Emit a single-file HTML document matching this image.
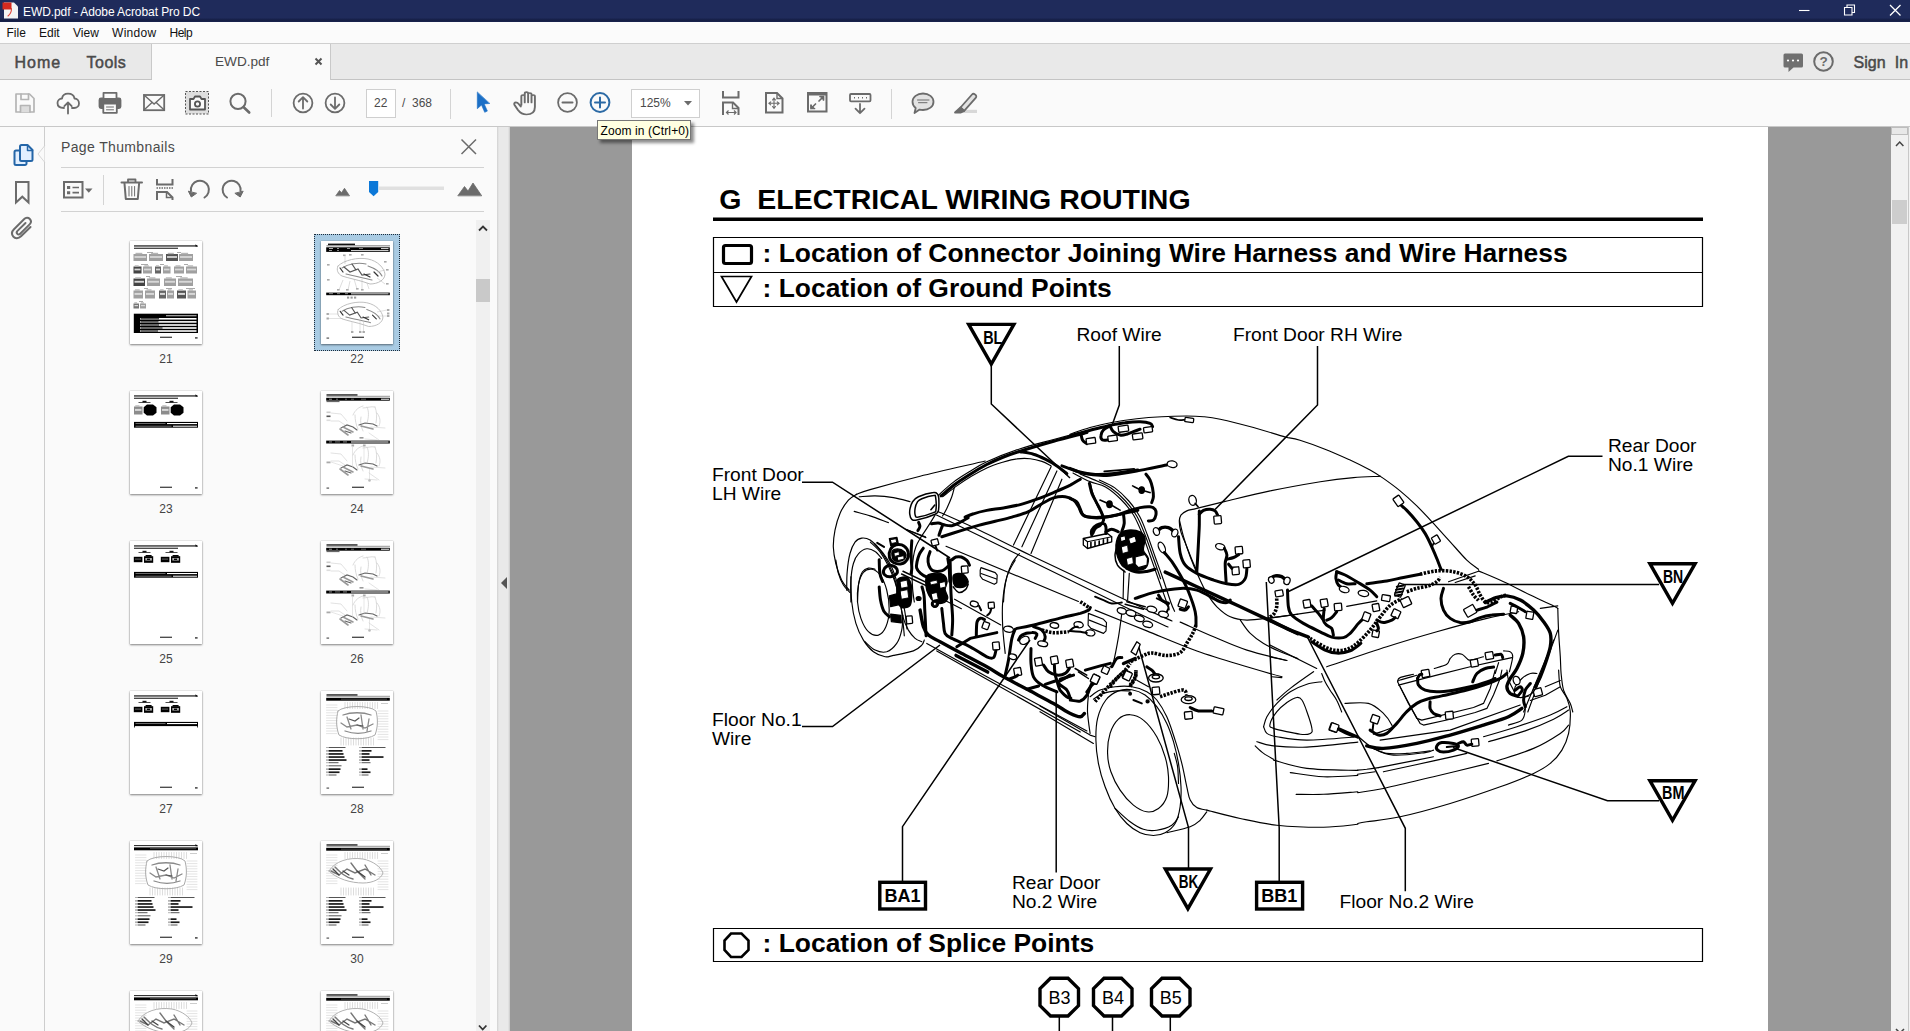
<!DOCTYPE html>
<html lang="en">
<head>
<meta charset="utf-8">
<title>EWD.pdf - Adobe Acrobat Pro DC</title>
<style>
html,body{margin:0;padding:0;}
body{width:1910px;height:1031px;overflow:hidden;position:relative;background:#fafafa;font-family:"Liberation Sans",sans-serif;color:#222;}
.abs{position:absolute;}
.t{position:absolute;white-space:pre;line-height:1;}
#titlebar{left:0;top:0;width:1910px;height:22px;background:linear-gradient(#1f2b5b 0,#1f2b5b 18px,#18224c 19px,#141d42 21px,#1b2654 22px);}
#titlebar .t{color:#fff;font-size:12px;left:23px;top:6px;letter-spacing:-0.08px;}
#menubar{left:0;top:22px;width:1910px;height:21px;background:#fbfbfb;border-bottom:1px solid #cfcfcf;}
#menubar .t{font-size:12px;top:5px;color:#111;}
#tabbar{left:0;top:44px;width:1910px;height:35px;background:#e9e9e9;border-bottom:1px solid #c4c4c4;}
#hometools{left:0;top:44px;width:152px;height:35px;background:#e9e9e9;border-right:1px solid #c9c9c9;box-sizing:border-box;}
#tab{left:152px;top:44px;width:179px;height:36px;background:#fafafa;border-right:1px solid #c9c9c9;box-sizing:border-box;}
#toolbar{left:0;top:80px;width:1910px;height:46px;background:#fafafa;border-bottom:1px solid #c8c8c8;}
#strip{left:0;top:127px;width:44px;height:904px;background:#fafafa;border-right:1px solid #cdcdcd;}
#panel{left:45px;top:127px;width:452px;height:904px;background:#fafafa;}
#splitter{left:497px;top:127px;width:13px;height:904px;background:linear-gradient(90deg,#d0d0d0 0,#e9e9e9 2px,#e9e9e9 11px,#c9c9c9 13px);}
#doc{left:510px;top:127px;width:1381px;height:904px;background:#999999;}
#page{left:632px;top:127px;width:1136px;height:904px;background:#ffffff;}
#vscroll{left:1891px;top:127px;width:19px;height:904px;background:#f1f1f1;}
.ui{color:#4a4a4a;}
.sb{-webkit-text-stroke:.5px #4a4a4a;}
.num{font-size:12px;color:#4a4a4a;}
.thumb{position:absolute;width:72px;height:103px;background:#fff;box-shadow:0 1px 2px rgba(0,0,0,.45),0 0 1px rgba(0,0,0,.3);overflow:hidden;}
.tl{position:absolute;width:40px;text-align:center;font-size:12px;color:#444;line-height:1;}
svg{position:absolute;left:0;top:0;overflow:visible;}
svg text{font-family:"Liberation Sans",sans-serif;}
</style>
</head>
<body>
<div id="titlebar" class="abs"><div class="t">EWD.pdf - Adobe Acrobat Pro DC</div></div>
<div id="menubar" class="abs">
<div class="t" style="left:6.5px">File</div>
<div class="t" style="left:39px">Edit</div>
<div class="t" style="left:73px">View</div>
<div class="t" style="left:112px;letter-spacing:.3px">Window</div>
<div class="t" style="left:169.5px;letter-spacing:-.5px">Help</div>
</div>
<div id="tabbar" class="abs"></div>
<div id="hometools" class="abs">
<div class="t ui sb" style="left:14.5px;top:11px;font-size:16px;letter-spacing:1px;">Home</div>
<div class="t ui sb" style="left:86.5px;top:11px;font-size:16px;letter-spacing:.5px;">Tools</div>
</div>
<div id="tab" class="abs">
<div class="t ui" style="left:63px;top:11px;font-size:13.6px;">EWD.pdf</div>
</div>
<div class="t ui sb" style="left:1853.5px;top:55px;font-size:16px;letter-spacing:0;word-spacing:4.8px;">Sign In</div>
<div id="toolbar" class="abs">
<div class="abs" style="left:366px;top:9px;width:28px;height:27px;border:1px solid #cfcfcf;background:#fff;"></div>
<div class="t num" style="left:374px;top:17px;">22</div>
<div class="t num" style="left:402px;top:17px;">/</div>
<div class="t num" style="left:412px;top:17px;">368</div>
<div class="abs" style="left:631px;top:9px;width:67px;height:27px;border:1px solid #cfcfcf;background:#fff;"></div>
<div class="t num" style="left:640px;top:17px;">125%</div>
</div>
<div id="strip" class="abs"></div>
<div id="panel" class="abs">
<div class="t ui" style="left:16px;top:13px;font-size:14px;letter-spacing:0.36px;">Page Thumbnails</div>
<div class="abs" style="left:16px;top:40px;width:423px;height:1px;background:#d2d2d2;"></div>
<div class="abs" style="left:16px;top:84px;width:423px;height:1px;background:#d2d2d2;"></div>
<div class="abs" style="left:431px;top:93px;width:14px;height:811px;background:#f0f0f0;"></div>
<div class="abs" style="left:431px;top:152px;width:14px;height:23px;background:#c9c9c9;"></div>
</div>
<div id="splitter" class="abs"></div>
<div id="doc" class="abs"></div>
<div id="page" class="abs"></div>
<div id="vscroll" class="abs">
<div class="abs" style="left:0;top:0;width:17px;height:8px;background:#e8e8e8;border:1px solid #bdbdbd;box-sizing:border-box;"></div><div class="abs" style="left:17px;top:0;width:1px;height:904px;background:#c8c8c8;"></div>
<div class="abs" style="left:1px;top:73px;width:15px;height:24px;background:#cdcdcd;"></div>
</div>
<div class="abs" style="left:597px;top:120px;width:92px;height:18px;background:#ffffe1;border:1px solid #767676;box-shadow:3px 3px 3px rgba(0,0,0,.45);">
<div class="t" style="left:2.5px;top:4px;font-size:12px;color:#000;letter-spacing:.1px">Zoom in (Ctrl+0)</div>
</div>
<div class="thumb" style="left:130px;top:241.3px;"><svg width="72" height="103" viewBox="0 0 72 103" style="filter:blur(.3px)" shape-rendering="auto"><rect x="4" y="4.4" width="63.5" height="1.1" fill="#000"/><path d="M65.5 3.2L68 5.5H65.5Z" fill="#000"/><rect x="4" y="6.7" width="44" height="1.1" fill="#222"/><rect x="3.5" y="13" width="13.5" height="7" fill="#a0a0a0"/><rect x="5.5" y="11.8" width="6.8" height="1.4" fill="#b5b5b5"/><rect x="4.5" y="15.1" width="11.5" height="1.8" fill="#d8d8d8"/><rect x="19" y="13" width="14" height="7" fill="#a0a0a0"/><rect x="21.1" y="11.8" width="7" height="1.4" fill="#b5b5b5"/><rect x="20" y="15.1" width="12" height="1.8" fill="#d8d8d8"/><rect x="36" y="13" width="12" height="7" fill="#555"/><rect x="37.8" y="11.8" width="6" height="1.4" fill="#b5b5b5"/><rect x="37" y="15.1" width="10" height="1.8" fill="#d8d8d8"/><rect x="49" y="13" width="14" height="7" fill="#a0a0a0"/><rect x="51.1" y="11.8" width="7" height="1.4" fill="#b5b5b5"/><rect x="50" y="15.1" width="12" height="1.8" fill="#d8d8d8"/><rect x="3.5" y="25.5" width="8" height="7" fill="#444"/><rect x="4.7" y="24.3" width="4" height="1.4" fill="#b5b5b5"/><rect x="4.5" y="27.6" width="6" height="1.8" fill="#d8d8d8"/><rect x="13" y="25.5" width="9" height="7" fill="#a0a0a0"/><rect x="14.3" y="24.3" width="4.5" height="1.4" fill="#b5b5b5"/><rect x="14" y="27.6" width="7" height="1.8" fill="#d8d8d8"/><rect x="25" y="25.5" width="6" height="7" fill="#666"/><rect x="25.9" y="24.3" width="3" height="1.4" fill="#b5b5b5"/><rect x="26" y="27.6" width="4" height="1.8" fill="#d8d8d8"/><rect x="33" y="25.5" width="7.5" height="7" fill="#a0a0a0"/><rect x="34.1" y="24.3" width="3.8" height="1.4" fill="#b5b5b5"/><rect x="34" y="27.6" width="5.5" height="1.8" fill="#d8d8d8"/><rect x="44" y="25.5" width="10" height="7" fill="#a0a0a0"/><rect x="45.5" y="24.3" width="5" height="1.4" fill="#b5b5b5"/><rect x="45" y="27.6" width="8" height="1.8" fill="#d8d8d8"/><rect x="56" y="25.5" width="11" height="7" fill="#a0a0a0"/><rect x="57.6" y="24.3" width="5.5" height="1.4" fill="#b5b5b5"/><rect x="57" y="27.6" width="9" height="1.8" fill="#d8d8d8"/><rect x="3.5" y="37.5" width="11.5" height="7.5" fill="#444"/><rect x="5.2" y="36.3" width="5.8" height="1.4" fill="#b5b5b5"/><rect x="4.5" y="39.8" width="9.5" height="1.9" fill="#d8d8d8"/><rect x="17" y="37.5" width="13" height="7.5" fill="#a0a0a0"/><rect x="18.9" y="36.3" width="6.5" height="1.4" fill="#b5b5b5"/><rect x="18" y="39.8" width="11" height="1.9" fill="#d8d8d8"/><rect x="34" y="37.5" width="12" height="7.5" fill="#a0a0a0"/><rect x="35.8" y="36.3" width="6" height="1.4" fill="#b5b5b5"/><rect x="35" y="39.8" width="10" height="1.9" fill="#d8d8d8"/><rect x="48" y="37.5" width="15" height="7.5" fill="#a0a0a0"/><rect x="50.2" y="36.3" width="7.5" height="1.4" fill="#b5b5b5"/><rect x="49" y="39.8" width="13" height="1.9" fill="#d8d8d8"/><rect x="3.5" y="49.5" width="9.5" height="8" fill="#a0a0a0"/><rect x="4.9" y="48.3" width="4.8" height="1.4" fill="#b5b5b5"/><rect x="4.5" y="51.9" width="7.5" height="2" fill="#d8d8d8"/><rect x="15" y="49.5" width="10" height="8" fill="#a0a0a0"/><rect x="16.5" y="48.3" width="5" height="1.4" fill="#b5b5b5"/><rect x="16" y="51.9" width="8" height="2" fill="#d8d8d8"/><rect x="29" y="49.5" width="7" height="8" fill="#666"/><rect x="30.1" y="48.3" width="3.5" height="1.4" fill="#b5b5b5"/><rect x="30" y="51.9" width="5" height="2" fill="#d8d8d8"/><rect x="37" y="49.5" width="7" height="8" fill="#a0a0a0"/><rect x="38" y="48.3" width="3.5" height="1.4" fill="#b5b5b5"/><rect x="38" y="51.9" width="5" height="2" fill="#d8d8d8"/><rect x="47" y="49.5" width="9" height="8" fill="#555"/><rect x="48.4" y="48.3" width="4.5" height="1.4" fill="#b5b5b5"/><rect x="48" y="51.9" width="7" height="2" fill="#d8d8d8"/><rect x="57.5" y="49.5" width="8.5" height="8" fill="#a0a0a0"/><rect x="58.8" y="48.3" width="4.2" height="1.4" fill="#b5b5b5"/><rect x="58.5" y="51.9" width="6.5" height="2" fill="#d8d8d8"/><rect x="3.5" y="62.5" width="5.5" height="5" fill="#777"/><rect x="4.3" y="61.3" width="2.8" height="1.4" fill="#b5b5b5"/><rect x="4.5" y="64" width="3.5" height="1.2" fill="#d8d8d8"/><rect x="10" y="62.5" width="6" height="5" fill="#a0a0a0"/><rect x="10.9" y="61.3" width="3" height="1.4" fill="#b5b5b5"/><rect x="11" y="64" width="4" height="1.2" fill="#d8d8d8"/><rect x="17" y="11" width="6" height="1" fill="#aaa"/><rect x="47" y="11" width="4" height="1" fill="#aaa"/><rect x="11" y="23" width="7" height="1" fill="#aaa"/><rect x="30" y="23" width="4" height="1" fill="#aaa"/><rect x="54" y="23" width="4" height="1" fill="#aaa"/><rect x="16" y="35" width="4" height="1" fill="#aaa"/><rect x="46" y="35" width="6" height="1" fill="#aaa"/><rect x="14" y="47" width="4" height="1" fill="#aaa"/><rect x="36" y="47" width="6" height="1" fill="#aaa"/><rect x="56" y="47" width="9" height="1" fill="#aaa"/><rect x="9" y="60" width="4" height="1" fill="#aaa"/><rect x="3.8" y="72.7" width="64.2" height="19.3" fill="#000"/><rect x="36" y="74.4" width="30.5" height="0.8" fill="#fff"/><rect x="10" y="77" width="56.5" height="1.6" fill="#fff"/><rect x="10.5" y="77.3" width="18.5" height="1" fill="#000"/><rect x="10" y="80.1" width="56.5" height="1.6" fill="#fff"/><rect x="10.5" y="80.4" width="18" height="1" fill="#000"/><rect x="10" y="83.2" width="56.5" height="1.6" fill="#fff"/><rect x="10.5" y="83.5" width="18.5" height="1" fill="#000"/><rect x="10" y="86.2" width="56.5" height="1.6" fill="#fff"/><rect x="10.5" y="86.5" width="22" height="1" fill="#000"/><rect x="10" y="89.2" width="56.5" height="1.6" fill="#fff"/><rect x="10.5" y="89.5" width="17.5" height="1" fill="#000"/><rect x="30" y="95.7" width="12" height="1.1" fill="#222"/><rect x="65" y="96.2" width="2.6" height="1.4" fill="#333"/></svg></div>
<div class="tl" style="left:146px;top:352.8px;">21</div>
<div class="abs" style="left:314px;top:234px;width:86px;height:117px;background:#a9cbe3;border:1px dotted #1c2b3a;box-sizing:border-box;"></div>
<div class="thumb" style="left:321px;top:241.3px;"><svg width="72" height="103" viewBox="0 0 72 103" style="filter:blur(.3px)" shape-rendering="auto"><rect x="7" y="2.6" width="27" height="1.5" fill="#111"/><rect x="5.5" y="4.6" width="63.5" height="0.6" fill="#222"/><rect x="5.2" y="6.3" width="63.6" height="4.6" fill="#000"/><rect x="8" y="7.2" width="4" height="0.8" fill="#ddd"/><rect x="16" y="7.2" width="2" height="0.8" fill="#bbb"/><rect x="26" y="7.2" width="3" height="0.8" fill="#bbb"/><rect x="38" y="7.2" width="4" height="0.8" fill="#999"/><rect x="60" y="7.2" width="7.5" height="0.9" fill="#fff"/><rect x="30" y="9.2" width="37.5" height="0.9" fill="#fff"/><rect x="8" y="9.2" width="3" height="0.8" fill="#bbb"/><rect x="16" y="9.2" width="2" height="0.8" fill="#999"/><g transform="translate(3 13) scale(1.0)" fill="none" stroke-linecap="round"><path d="M14 12C20 6 34 3 44 5C54 7 60 14 61 20C61 26 54 30 46 30L40 28C34 26 24 24 18 22C14 20 12 16 14 12Z" stroke="#bdbdbd" stroke-width="1"/><path d="M18 14C24 10 34 8 42 10M22 20C30 22 40 24 48 26M44 12C50 14 56 18 58 22" stroke="#8a8a8a" stroke-width="1.1"/><path d="M20 13l6 5l8-3l4 6l8-1M28 10l4 6" stroke="#555" stroke-width="1.2"/><path d="M16 14l3 4M40 20l6 3M50 18l4 4" stroke="#333" stroke-width="1.2"/></g><rect x="22" y="13.5" width="2.6" height="1.6" fill="#aaa"/><rect x="28" y="13" width="2.6" height="1.6" fill="#aaa"/><rect x="40" y="13" width="2.6" height="1.6" fill="#aaa"/><rect x="6" y="23" width="2.6" height="1.6" fill="#aaa"/><rect x="6" y="38" width="2.6" height="1.6" fill="#aaa"/><rect x="63" y="20" width="2.6" height="1.6" fill="#aaa"/><rect x="65" y="28" width="2.6" height="1.6" fill="#aaa"/><rect x="65" y="42" width="2.6" height="1.6" fill="#aaa"/><rect x="16" y="48" width="2.6" height="1.6" fill="#aaa"/><rect x="25" y="48" width="2.6" height="1.6" fill="#aaa"/><rect x="35" y="47" width="2.6" height="1.6" fill="#aaa"/><rect x="40" y="48" width="2.6" height="1.6" fill="#aaa"/><path d="M24 15v8M18 49l4-10M27 49l2-9M36 48l-3-10M41 48v-10M48 48l-2-6M64 29l-8 2M64 43l-8-6" stroke="#bbb" stroke-width=".5" fill="none"/><rect x="5.2" y="51.6" width="63.6" height="2.6" fill="#000"/><rect x="30" y="52.4" width="37.5" height="0.9" fill="#fff"/><rect x="8" y="52.4" width="4" height="0.7" fill="#bbb"/><rect x="16" y="52.4" width="3" height="0.7" fill="#bbb"/><rect x="24" y="52.4" width="3" height="0.7" fill="#bbb"/><rect x="26" y="55.6" width="2.2" height="2" fill="#999"/><rect x="29.5" y="55.6" width="2.2" height="2" fill="#999"/><rect x="33" y="55.6" width="2.2" height="2" fill="#999"/><g transform="translate(4 57) scale(0.95)" fill="none" stroke-linecap="round"><path d="M14 12C20 6 34 3 44 5C54 7 60 14 61 20C61 26 54 30 46 30L40 28C34 26 24 24 18 22C14 20 12 16 14 12Z" stroke="#bdbdbd" stroke-width="1"/><path d="M18 14C24 10 34 8 42 10M22 20C30 22 40 24 48 26M44 12C50 14 56 18 58 22" stroke="#8a8a8a" stroke-width="1.1"/><path d="M20 13l6 5l8-3l4 6l8-1M28 10l4 6" stroke="#555" stroke-width="1.2"/><path d="M16 14l3 4M40 20l6 3M50 18l4 4" stroke="#333" stroke-width="1.2"/></g><rect x="5.5" y="72" width="2.4" height="2" fill="#aaa"/><rect x="5.5" y="76.5" width="2.4" height="2" fill="#aaa"/><rect x="66" y="68" width="2.4" height="2" fill="#aaa"/><rect x="66" y="71.5" width="2.4" height="2" fill="#aaa"/><rect x="66" y="74" width="2.4" height="2" fill="#aaa"/><rect x="30" y="90" width="2.4" height="2" fill="#aaa"/><rect x="38" y="90" width="2.4" height="2" fill="#aaa"/><rect x="41.5" y="90" width="2.4" height="2" fill="#aaa"/><path d="M8 73h10M8 77.5h14M66 69l-10 2M66 75l-8 0M31 90v-10M39 90v-12M42.5 90v-10" stroke="#c4c4c4" stroke-width=".5" fill="none"/><rect x="31" y="95.7" width="12" height="1.1" fill="#222"/><rect x="5.5" y="96.5" width="2.6" height="1.2" fill="#555"/></svg></div>
<div class="tl" style="left:337px;top:352.8px;">22</div>
<div class="thumb" style="left:130px;top:391.3px;"><svg width="72" height="103" viewBox="0 0 72 103" style="filter:blur(.3px)" shape-rendering="auto"><rect x="4" y="4.4" width="63.5" height="1.1" fill="#000"/><path d="M65.5 3.2L68 5.5H65.5Z" fill="#000"/><rect x="4" y="6.7" width="44" height="1.1" fill="#222"/><rect x="8.5" y="11.2" width="12" height="0.8" fill="#222"/><rect x="12.5" y="9.8" width="4" height="1.6" fill="#111"/><rect x="4" y="15.5" width="8.5" height="8" fill="#8c8c8c"/><rect x="5.3" y="14.3" width="4.2" height="1.4" fill="#b5b5b5"/><rect x="5" y="17.9" width="6.5" height="2" fill="#d8d8d8"/><path d="M17 13.6h6l3.5 2.6v5.6l-3.5 2.7h-6l-3.3 -2.7v-5.6z" fill="#000"/><rect x="35.5" y="11.2" width="12" height="0.8" fill="#222"/><rect x="39.5" y="9.8" width="4" height="1.6" fill="#111"/><rect x="31" y="15.5" width="8.5" height="8" fill="#8c8c8c"/><rect x="32.3" y="14.3" width="4.2" height="1.4" fill="#b5b5b5"/><rect x="32" y="17.9" width="6.5" height="2" fill="#d8d8d8"/><path d="M44 13.6h6l3.5 2.6v5.6l-3.5 2.7h-6l-3.3 -2.7v-5.6z" fill="#000"/><rect x="4" y="30.9" width="64" height="5.8" fill="#000"/><rect x="37" y="32" width="30" height="1.1" fill="#fff"/><rect x="43" y="34.7" width="24" height="1" fill="#fff"/><rect x="5.5" y="32.1" width="30" height="0.7" fill="#999"/><rect x="5.5" y="34.8" width="36" height="0.7" fill="#999"/><rect x="30" y="95.7" width="12" height="1.1" fill="#222"/><rect x="65" y="96.2" width="2.6" height="1.4" fill="#333"/></svg></div>
<div class="tl" style="left:146px;top:502.8px;">23</div>
<div class="thumb" style="left:321px;top:391.3px;"><svg width="72" height="103" viewBox="0 0 72 103" style="filter:blur(.3px)" shape-rendering="auto"><rect x="5.5" y="3.3" width="31" height="1.3" fill="#111"/><rect x="5.5" y="4.9" width="63.5" height="0.5" fill="#333"/><rect x="5.2" y="6.8" width="63.6" height="2.9" fill="#000"/><rect x="60" y="7.7" width="8" height="1" fill="#fff"/><rect x="8" y="7.8" width="3" height="0.7" fill="#ccc"/><rect x="15" y="7.8" width="2" height="0.7" fill="#999"/><rect x="24" y="7.8" width="2" height="0.7" fill="#888"/><rect x="30" y="7.8" width="3" height="0.7" fill="#888"/><rect x="40" y="7.8" width="5" height="0.7" fill="#888"/><rect x="5.5" y="10.2" width="13" height="0.9" fill="#444"/><g transform="translate(0 14)" fill="none" stroke-linecap="round"><path d="M32 10c2-5 6-8 10-9M42 3c4 0 8-2 12-1M46 2c2 4 2 10 0 16M54 2c2 5 2 10 1 16M34 10c0 5 1 10 3 14M40 12c-1 5 0 10 2 14M56 8c3 4 4 8 2 13" stroke="#d2d2d2" stroke-width=".8"/><path d="M10 8l10 1l6 7M10 16h8l6 4M50 22l14 1M48 28l10 7M44 34l12 1" stroke="#cfcfcf" stroke-width=".6"/><path d="M20 23l6-3l6 2l4 3M24 26l6 2M38 20l6-2l8 1l4 2" stroke="#666" stroke-width="1.2"/><path d="M19 24l8 6M22 22l10 5M40 21l12 3" stroke="#999" stroke-width="1.6"/></g><rect x="5.5" y="20.5" width="4" height="1.6" fill="#ccc"/><rect x="5.5" y="24.5" width="4" height="1.6" fill="#555"/><rect x="5.5" y="28.5" width="4" height="1.6" fill="#ddd"/><rect x="38.5" y="46" width="4" height="1.6" fill="#999"/><rect x="5.2" y="49.6" width="63.6" height="2.9" fill="#000"/><rect x="30" y="50.5" width="37.5" height="1" fill="#fff"/><rect x="8" y="50.6" width="3" height="0.7" fill="#bbb"/><rect x="14" y="50.6" width="5" height="0.7" fill="#999"/><rect x="22" y="50.6" width="4" height="0.7" fill="#bbb"/><rect x="30.5" y="53.5" width="2.6" height="2" fill="#aaa"/><rect x="42" y="53.5" width="2.6" height="2" fill="#aaa"/><g transform="translate(0 54)" fill="none" stroke-linecap="round"><path d="M32 10c2-5 6-8 10-9M42 3c4 0 8-2 12-1M46 2c2 4 2 10 0 16M54 2c2 5 2 10 1 16M34 10c0 5 1 10 3 14M40 12c-1 5 0 10 2 14M56 8c3 4 4 8 2 13" stroke="#d2d2d2" stroke-width=".8"/><path d="M10 8l10 1l6 7M10 16h8l6 4M50 22l14 1M48 28l10 7M44 34l12 1" stroke="#cfcfcf" stroke-width=".6"/><path d="M20 23l6-3l6 2l4 3M24 26l6 2M38 20l6-2l8 1l4 2" stroke="#666" stroke-width="1.2"/><path d="M19 24l8 6M22 22l10 5M40 21l12 3" stroke="#999" stroke-width="1.6"/></g><rect x="5.5" y="70.5" width="4" height="1.8" fill="#aaa"/><path d="M31.5 56v20M43 56v18M10 71l12 4M48.5 78v12" stroke="#ccc" stroke-width=".5" fill="none"/><circle cx="48.5" cy="89.5" r="1.3" fill="#bbb"/><rect x="31" y="95.7" width="12" height="1.1" fill="#222"/><rect x="5.5" y="96.5" width="2.6" height="1.2" fill="#555"/></svg></div>
<div class="tl" style="left:337px;top:502.8px;">24</div>
<div class="thumb" style="left:130px;top:541.3px;"><svg width="72" height="103" viewBox="0 0 72 103" style="filter:blur(.3px)" shape-rendering="auto"><rect x="4" y="4.4" width="63.5" height="1.1" fill="#000"/><path d="M65.5 3.2L68 5.5H65.5Z" fill="#000"/><rect x="4" y="6.7" width="44" height="1.1" fill="#222"/><rect x="8.5" y="11.2" width="12" height="0.8" fill="#222"/><rect x="12.5" y="9.8" width="4" height="1.6" fill="#111"/><rect x="3.8" y="15.8" width="8.6" height="5.4" fill="#000"/><rect x="5" y="17.5" width="6" height="1.2" fill="#555"/><rect x="14" y="15.2" width="9.2" height="6.6" fill="#000"/><rect x="15.6" y="14" width="6" height="1.6" fill="#000"/><rect x="15.3" y="17" width="6.6" height="2.6" fill="#aaa"/><rect x="17" y="17.6" width="3" height="1.4" fill="#000"/><rect x="35.5" y="11.2" width="12" height="0.8" fill="#222"/><rect x="39.5" y="9.8" width="4" height="1.6" fill="#111"/><rect x="30.8" y="15.8" width="8.6" height="5.4" fill="#000"/><rect x="32" y="17.5" width="6" height="1.2" fill="#555"/><rect x="41" y="15.2" width="9.2" height="6.6" fill="#000"/><rect x="42.6" y="14" width="6" height="1.6" fill="#000"/><rect x="42.3" y="17" width="6.6" height="2.6" fill="#aaa"/><rect x="44" y="17.6" width="3" height="1.4" fill="#000"/><rect x="4" y="30.9" width="64" height="5.8" fill="#000"/><rect x="37" y="32" width="30" height="1.1" fill="#fff"/><rect x="43" y="34.7" width="24" height="1" fill="#fff"/><rect x="5.5" y="32.1" width="30" height="0.7" fill="#999"/><rect x="5.5" y="34.8" width="36" height="0.7" fill="#999"/><rect x="30" y="95.7" width="12" height="1.1" fill="#222"/><rect x="65" y="96.2" width="2.6" height="1.4" fill="#333"/></svg></div>
<div class="tl" style="left:146px;top:652.8px;">25</div>
<div class="thumb" style="left:321px;top:541.3px;"><svg width="72" height="103" viewBox="0 0 72 103" style="filter:blur(.3px)" shape-rendering="auto"><rect x="5.5" y="3.3" width="31" height="1.3" fill="#111"/><rect x="5.5" y="4.9" width="63.5" height="0.5" fill="#333"/><rect x="5.2" y="6.8" width="63.6" height="2.9" fill="#000"/><rect x="60" y="7.7" width="8" height="1" fill="#fff"/><rect x="8" y="7.8" width="3" height="0.7" fill="#ccc"/><rect x="15" y="7.8" width="2" height="0.7" fill="#999"/><rect x="24" y="7.8" width="2" height="0.7" fill="#888"/><rect x="30" y="7.8" width="3" height="0.7" fill="#888"/><rect x="40" y="7.8" width="5" height="0.7" fill="#888"/><rect x="5.5" y="10.2" width="13" height="0.9" fill="#444"/><g transform="translate(0 14)" fill="none" stroke-linecap="round"><path d="M32 10c2-5 6-8 10-9M42 3c4 0 8-2 12-1M46 2c2 4 2 10 0 16M54 2c2 5 2 10 1 16M34 10c0 5 1 10 3 14M40 12c-1 5 0 10 2 14M56 8c3 4 4 8 2 13" stroke="#d2d2d2" stroke-width=".8"/><path d="M10 8l10 1l6 7M10 16h8l6 4M50 22l14 1M48 28l10 7M44 34l12 1" stroke="#cfcfcf" stroke-width=".6"/><path d="M20 23l6-3l6 2l4 3M24 26l6 2M38 20l6-2l8 1l4 2" stroke="#666" stroke-width="1.2"/><path d="M19 24l8 6M22 22l10 5M40 21l12 3" stroke="#999" stroke-width="1.6"/></g><rect x="5.5" y="20.5" width="4" height="1.6" fill="#ccc"/><rect x="5.5" y="24.5" width="4" height="1.6" fill="#555"/><rect x="5.5" y="28.5" width="4" height="1.6" fill="#ddd"/><rect x="38.5" y="46" width="4" height="1.6" fill="#999"/><rect x="5.2" y="49.6" width="63.6" height="2.9" fill="#000"/><rect x="30" y="50.5" width="37.5" height="1" fill="#fff"/><rect x="8" y="50.6" width="3" height="0.7" fill="#bbb"/><rect x="14" y="50.6" width="5" height="0.7" fill="#999"/><rect x="22" y="50.6" width="4" height="0.7" fill="#bbb"/><rect x="30.5" y="53.5" width="2.6" height="2" fill="#aaa"/><rect x="42" y="53.5" width="2.6" height="2" fill="#aaa"/><g transform="translate(0 54)" fill="none" stroke-linecap="round"><path d="M32 10c2-5 6-8 10-9M42 3c4 0 8-2 12-1M46 2c2 4 2 10 0 16M54 2c2 5 2 10 1 16M34 10c0 5 1 10 3 14M40 12c-1 5 0 10 2 14M56 8c3 4 4 8 2 13" stroke="#d2d2d2" stroke-width=".8"/><path d="M10 8l10 1l6 7M10 16h8l6 4M50 22l14 1M48 28l10 7M44 34l12 1" stroke="#cfcfcf" stroke-width=".6"/><path d="M20 23l6-3l6 2l4 3M24 26l6 2M38 20l6-2l8 1l4 2" stroke="#666" stroke-width="1.2"/><path d="M19 24l8 6M22 22l10 5M40 21l12 3" stroke="#999" stroke-width="1.6"/></g><rect x="5.5" y="70.5" width="4" height="1.8" fill="#aaa"/><path d="M31.5 56v20M43 56v18M10 71l12 4M48.5 78v12" stroke="#ccc" stroke-width=".5" fill="none"/><circle cx="48.5" cy="89.5" r="1.3" fill="#bbb"/><rect x="31" y="95.7" width="12" height="1.1" fill="#222"/><rect x="5.5" y="96.5" width="2.6" height="1.2" fill="#555"/></svg></div>
<div class="tl" style="left:337px;top:652.8px;">26</div>
<div class="thumb" style="left:130px;top:691.3px;"><svg width="72" height="103" viewBox="0 0 72 103" style="filter:blur(.3px)" shape-rendering="auto"><rect x="4" y="4.4" width="63.5" height="1.1" fill="#000"/><path d="M65.5 3.2L68 5.5H65.5Z" fill="#000"/><rect x="4" y="6.7" width="44" height="1.1" fill="#222"/><rect x="8.5" y="11.2" width="12" height="0.8" fill="#222"/><rect x="12.5" y="9.8" width="4" height="1.6" fill="#111"/><rect x="3.8" y="15.8" width="8.6" height="5.4" fill="#000"/><rect x="5" y="17.5" width="6" height="1.2" fill="#555"/><rect x="14" y="15.2" width="9.2" height="6.6" fill="#000"/><rect x="15.6" y="14" width="6" height="1.6" fill="#000"/><rect x="15.3" y="17" width="6.6" height="2.6" fill="#aaa"/><rect x="17" y="17.6" width="3" height="1.4" fill="#000"/><rect x="35.5" y="11.2" width="12" height="0.8" fill="#222"/><rect x="39.5" y="9.8" width="4" height="1.6" fill="#111"/><rect x="30.8" y="15.8" width="8.6" height="5.4" fill="#000"/><rect x="32" y="17.5" width="6" height="1.2" fill="#555"/><rect x="41" y="15.2" width="9.2" height="6.6" fill="#000"/><rect x="42.6" y="14" width="6" height="1.6" fill="#000"/><rect x="42.3" y="17" width="6.6" height="2.6" fill="#aaa"/><rect x="44" y="17.6" width="3" height="1.4" fill="#000"/><rect x="4" y="30.9" width="64" height="4.2" fill="#000"/><rect x="37" y="32" width="30" height="1.1" fill="#fff"/><rect x="5.5" y="32.1" width="30" height="0.7" fill="#999"/><rect x="4" y="35.2" width="1" height="1.2" fill="#000"/><rect x="67" y="35.2" width="1" height="1.2" fill="#000"/><rect x="30" y="95.7" width="12" height="1.1" fill="#222"/><rect x="65" y="96.2" width="2.6" height="1.4" fill="#333"/></svg></div>
<div class="tl" style="left:146px;top:802.8px;">27</div>
<div class="thumb" style="left:321px;top:691.3px;"><svg width="72" height="103" viewBox="0 0 72 103" style="filter:blur(.3px)" shape-rendering="auto"><rect x="5.5" y="3.3" width="31" height="1.3" fill="#111"/><rect x="5.5" y="4.9" width="63.5" height="0.5" fill="#333"/><rect x="5.2" y="6.8" width="63.6" height="2.9" fill="#000"/><rect x="20" y="7.8" width="46" height="0.6" fill="#777"/><g fill="none" stroke-linecap="round"><path d="M5.5 14H16M57 20H67" stroke="#d0d0d0" stroke-width=".6"/><path d="M5.5 16.6H16M57 22.6H67" stroke="#d0d0d0" stroke-width=".6"/><path d="M5.5 19.2H16M57 25.2H67" stroke="#d0d0d0" stroke-width=".6"/><path d="M5.5 21.8H16M57 27.8H67" stroke="#d0d0d0" stroke-width=".6"/><path d="M5.5 24.4H16M57 30.4H67" stroke="#d0d0d0" stroke-width=".6"/><path d="M5.5 27H16M57 33H67" stroke="#d0d0d0" stroke-width=".6"/><path d="M5.5 29.6H16M57 35.6H67" stroke="#d0d0d0" stroke-width=".6"/><path d="M5.5 32.2H16M57 38.2H67" stroke="#d0d0d0" stroke-width=".6"/><path d="M5.5 34.8H16M57 40.8H67" stroke="#d0d0d0" stroke-width=".6"/><path d="M5.5 37.4H16M57 43.4H67" stroke="#d0d0d0" stroke-width=".6"/><path d="M5.5 40H16M57 46H67" stroke="#d0d0d0" stroke-width=".6"/><path d="M5.5 42.6H16M57 48.6H67" stroke="#d0d0d0" stroke-width=".6"/><path d="M24 11.5v6M20 47v7" stroke="#cfcfcf" stroke-width=".7"/><path d="M26.5 11.5v6M22.5 47v7" stroke="#cfcfcf" stroke-width=".7"/><path d="M29 11.5v6M25 47v7" stroke="#cfcfcf" stroke-width=".7"/><path d="M31.5 11.5v6M27.5 47v7" stroke="#cfcfcf" stroke-width=".7"/><path d="M34 11.5v6M30 47v7" stroke="#cfcfcf" stroke-width=".7"/><path d="M36.5 11.5v6M32.5 47v7" stroke="#cfcfcf" stroke-width=".7"/><path d="M39 11.5v6M35 47v7" stroke="#cfcfcf" stroke-width=".7"/><path d="M41.5 11.5v6M37.5 47v7" stroke="#cfcfcf" stroke-width=".7"/><path d="M44 11.5v6M40 47v7" stroke="#cfcfcf" stroke-width=".7"/><path d="M46.5 11.5v6M42.5 47v7" stroke="#cfcfcf" stroke-width=".7"/><path d="M49 11.5v6M45 47v7" stroke="#cfcfcf" stroke-width=".7"/><path d="M51.5 11.5v6M47.5 47v7" stroke="#cfcfcf" stroke-width=".7"/><path d="M54 11.5v6M50 47v7" stroke="#cfcfcf" stroke-width=".7"/><path d="M56.5 11.5v6M52.5 47v7" stroke="#cfcfcf" stroke-width=".7"/><path d="M17 20c6-6 32-6 38 0c2 8 2 16-1 24c-8 5-28 5-36 0c-3-8-3-16-1-24z" stroke="#aaa" stroke-width="1"/><path d="M22 24c8-3 20-3 28 0M20 32l6 4l10-2l8 3l8-4M26 26l4 12M40 24l2 14M48 28l-2 12M24 40c8 3 18 3 26 0" stroke="#8a8a8a" stroke-width="1.3"/><path d="M28 28l6 2l4-3M36 34l6 1" stroke="#555" stroke-width="1.2"/></g><rect x="60" y="12" width="7" height="1" fill="#ccc"/><rect x="5.5" y="56" width="1" height="1" fill="#666"/><rect x="7.5" y="56" width="17" height="1" fill="#555"/><rect x="38.5" y="56" width="1" height="1" fill="#666"/><rect x="40.5" y="56" width="24" height="1" fill="#555"/><rect x="5.5" y="59" width="1" height="1.7" fill="#666"/><rect x="7.5" y="59" width="14" height="1.7" fill="#1a1a1a"/><rect x="38.5" y="59" width="1" height="1.7" fill="#666"/><rect x="40.5" y="59" width="10" height="1.7" fill="#1a1a1a"/><rect x="5.5" y="62.1" width="1" height="1.7" fill="#666"/><rect x="7.5" y="62.1" width="15" height="1.7" fill="#1a1a1a"/><rect x="38.5" y="62.1" width="1" height="1.7" fill="#666"/><rect x="40.5" y="62.1" width="8" height="1.7" fill="#1a1a1a"/><rect x="5.5" y="65.2" width="1" height="1.7" fill="#666"/><rect x="7.5" y="65.2" width="16" height="1.7" fill="#1a1a1a"/><rect x="38.5" y="65.2" width="1" height="1.7" fill="#666"/><rect x="40.5" y="65.2" width="22" height="1.7" fill="#1a1a1a"/><rect x="5.5" y="68.2" width="1" height="1.7" fill="#666"/><rect x="7.5" y="68.2" width="18" height="1.7" fill="#1a1a1a"/><rect x="38.5" y="68.2" width="1" height="1.7" fill="#666"/><rect x="40.5" y="68.2" width="8" height="1.7" fill="#1a1a1a"/><rect x="5.5" y="71.2" width="1" height="1" fill="#666"/><rect x="7.5" y="71.2" width="10" height="1" fill="#555"/><rect x="38.5" y="71.2" width="1" height="1" fill="#666"/><rect x="40.5" y="71.2" width="9" height="1" fill="#555"/><rect x="5.5" y="74.3" width="1" height="1" fill="#666"/><rect x="7.5" y="74.3" width="13" height="1" fill="#555"/><rect x="5.5" y="77.3" width="1" height="1.7" fill="#666"/><rect x="7.5" y="77.3" width="12" height="1.7" fill="#1a1a1a"/><rect x="38.5" y="77.3" width="1" height="1.7" fill="#666"/><rect x="40.5" y="77.3" width="6" height="1.7" fill="#1a1a1a"/><rect x="5.5" y="80.4" width="1" height="1.7" fill="#666"/><rect x="7.5" y="80.4" width="11" height="1.7" fill="#1a1a1a"/><rect x="38.5" y="80.4" width="1" height="1.7" fill="#666"/><rect x="40.5" y="80.4" width="9" height="1.7" fill="#1a1a1a"/><rect x="5.5" y="83.5" width="1" height="1" fill="#666"/><rect x="7.5" y="83.5" width="8" height="1" fill="#555"/><rect x="38.5" y="83.5" width="1" height="1" fill="#666"/><rect x="40.5" y="83.5" width="7" height="1" fill="#555"/><rect x="31" y="95.7" width="12" height="1.1" fill="#222"/><rect x="5.5" y="96.5" width="2.6" height="1.2" fill="#555"/></svg></div>
<div class="tl" style="left:337px;top:802.8px;">28</div>
<div class="thumb" style="left:130px;top:841.3px;"><svg width="72" height="103" viewBox="0 0 72 103" style="filter:blur(.3px)" shape-rendering="auto"><rect x="4" y="4.2" width="63.5" height="0.9" fill="#000"/><path d="M65.5 3L68 5.2H65.5Z" fill="#000"/><rect x="4" y="6.4" width="64" height="2.9" fill="#000"/><rect x="20" y="7.5" width="46" height="0.6" fill="#777"/><g fill="none" stroke-linecap="round"><path d="M5.5 14H16M57 20H67" stroke="#d0d0d0" stroke-width=".6"/><path d="M5.5 16.6H16M57 22.6H67" stroke="#d0d0d0" stroke-width=".6"/><path d="M5.5 19.2H16M57 25.2H67" stroke="#d0d0d0" stroke-width=".6"/><path d="M5.5 21.8H16M57 27.8H67" stroke="#d0d0d0" stroke-width=".6"/><path d="M5.5 24.4H16M57 30.4H67" stroke="#d0d0d0" stroke-width=".6"/><path d="M5.5 27H16M57 33H67" stroke="#d0d0d0" stroke-width=".6"/><path d="M5.5 29.6H16M57 35.6H67" stroke="#d0d0d0" stroke-width=".6"/><path d="M5.5 32.2H16M57 38.2H67" stroke="#d0d0d0" stroke-width=".6"/><path d="M5.5 34.8H16M57 40.8H67" stroke="#d0d0d0" stroke-width=".6"/><path d="M5.5 37.4H16M57 43.4H67" stroke="#d0d0d0" stroke-width=".6"/><path d="M5.5 40H16M57 46H67" stroke="#d0d0d0" stroke-width=".6"/><path d="M5.5 42.6H16M57 48.6H67" stroke="#d0d0d0" stroke-width=".6"/><path d="M24 11.5v6M20 47v7" stroke="#cfcfcf" stroke-width=".7"/><path d="M26.5 11.5v6M22.5 47v7" stroke="#cfcfcf" stroke-width=".7"/><path d="M29 11.5v6M25 47v7" stroke="#cfcfcf" stroke-width=".7"/><path d="M31.5 11.5v6M27.5 47v7" stroke="#cfcfcf" stroke-width=".7"/><path d="M34 11.5v6M30 47v7" stroke="#cfcfcf" stroke-width=".7"/><path d="M36.5 11.5v6M32.5 47v7" stroke="#cfcfcf" stroke-width=".7"/><path d="M39 11.5v6M35 47v7" stroke="#cfcfcf" stroke-width=".7"/><path d="M41.5 11.5v6M37.5 47v7" stroke="#cfcfcf" stroke-width=".7"/><path d="M44 11.5v6M40 47v7" stroke="#cfcfcf" stroke-width=".7"/><path d="M46.5 11.5v6M42.5 47v7" stroke="#cfcfcf" stroke-width=".7"/><path d="M49 11.5v6M45 47v7" stroke="#cfcfcf" stroke-width=".7"/><path d="M51.5 11.5v6M47.5 47v7" stroke="#cfcfcf" stroke-width=".7"/><path d="M54 11.5v6M50 47v7" stroke="#cfcfcf" stroke-width=".7"/><path d="M56.5 11.5v6M52.5 47v7" stroke="#cfcfcf" stroke-width=".7"/><path d="M17 20c6-6 32-6 38 0c2 8 2 16-1 24c-8 5-28 5-36 0c-3-8-3-16-1-24z" stroke="#aaa" stroke-width="1"/><path d="M22 24c8-3 20-3 28 0M20 32l6 4l10-2l8 3l8-4M26 26l4 12M40 24l2 14M48 28l-2 12M24 40c8 3 18 3 26 0" stroke="#8a8a8a" stroke-width="1.3"/><path d="M28 28l6 2l4-3M36 34l6 1" stroke="#555" stroke-width="1.2"/></g><rect x="60" y="12" width="7" height="1" fill="#ccc"/><rect x="5.5" y="56" width="1" height="1" fill="#666"/><rect x="7.5" y="56" width="17" height="1" fill="#555"/><rect x="38.5" y="56" width="1" height="1" fill="#666"/><rect x="40.5" y="56" width="24" height="1" fill="#555"/><rect x="5.5" y="59" width="1" height="1.7" fill="#666"/><rect x="7.5" y="59" width="14" height="1.7" fill="#1a1a1a"/><rect x="38.5" y="59" width="1" height="1.7" fill="#666"/><rect x="40.5" y="59" width="10" height="1.7" fill="#1a1a1a"/><rect x="5.5" y="62.1" width="1" height="1.7" fill="#666"/><rect x="7.5" y="62.1" width="15" height="1.7" fill="#1a1a1a"/><rect x="38.5" y="62.1" width="1" height="1.7" fill="#666"/><rect x="40.5" y="62.1" width="8" height="1.7" fill="#1a1a1a"/><rect x="5.5" y="65.2" width="1" height="1.7" fill="#666"/><rect x="7.5" y="65.2" width="16" height="1.7" fill="#1a1a1a"/><rect x="38.5" y="65.2" width="1" height="1.7" fill="#666"/><rect x="40.5" y="65.2" width="22" height="1.7" fill="#1a1a1a"/><rect x="5.5" y="68.2" width="1" height="1.7" fill="#666"/><rect x="7.5" y="68.2" width="18" height="1.7" fill="#1a1a1a"/><rect x="38.5" y="68.2" width="1" height="1.7" fill="#666"/><rect x="40.5" y="68.2" width="8" height="1.7" fill="#1a1a1a"/><rect x="5.5" y="71.2" width="1" height="1" fill="#666"/><rect x="7.5" y="71.2" width="10" height="1" fill="#555"/><rect x="38.5" y="71.2" width="1" height="1" fill="#666"/><rect x="40.5" y="71.2" width="9" height="1" fill="#555"/><rect x="5.5" y="74.3" width="1" height="1" fill="#666"/><rect x="7.5" y="74.3" width="13" height="1" fill="#555"/><rect x="5.5" y="77.3" width="1" height="1.7" fill="#666"/><rect x="7.5" y="77.3" width="12" height="1.7" fill="#1a1a1a"/><rect x="38.5" y="77.3" width="1" height="1.7" fill="#666"/><rect x="40.5" y="77.3" width="6" height="1.7" fill="#1a1a1a"/><rect x="5.5" y="80.4" width="1" height="1.7" fill="#666"/><rect x="7.5" y="80.4" width="11" height="1.7" fill="#1a1a1a"/><rect x="38.5" y="80.4" width="1" height="1.7" fill="#666"/><rect x="40.5" y="80.4" width="9" height="1.7" fill="#1a1a1a"/><rect x="5.5" y="83.5" width="1" height="1" fill="#666"/><rect x="7.5" y="83.5" width="8" height="1" fill="#555"/><rect x="38.5" y="83.5" width="1" height="1" fill="#666"/><rect x="40.5" y="83.5" width="7" height="1" fill="#555"/><rect x="30" y="95.7" width="12" height="1.1" fill="#222"/><rect x="65" y="96.2" width="2.6" height="1.4" fill="#333"/></svg></div>
<div class="tl" style="left:146px;top:952.8px;">29</div>
<div class="thumb" style="left:321px;top:841.3px;"><svg width="72" height="103" viewBox="0 0 72 103" style="filter:blur(.3px)" shape-rendering="auto"><rect x="5.5" y="3.3" width="31" height="1.3" fill="#111"/><rect x="5.5" y="4.9" width="63.5" height="0.5" fill="#333"/><rect x="5.2" y="6.8" width="63.6" height="2.9" fill="#000"/><rect x="20" y="7.8" width="46" height="0.6" fill="#777"/><g fill="none" stroke-linecap="round"><path d="M5.5 14H16M57 20H67" stroke="#d0d0d0" stroke-width=".6"/><path d="M5.5 16.6H16M57 22.6H67" stroke="#d0d0d0" stroke-width=".6"/><path d="M5.5 19.2H16M57 25.2H67" stroke="#d0d0d0" stroke-width=".6"/><path d="M5.5 21.8H16M57 27.8H67" stroke="#d0d0d0" stroke-width=".6"/><path d="M5.5 24.4H16M57 30.4H67" stroke="#d0d0d0" stroke-width=".6"/><path d="M5.5 27H16M57 33H67" stroke="#d0d0d0" stroke-width=".6"/><path d="M5.5 29.6H16M57 35.6H67" stroke="#d0d0d0" stroke-width=".6"/><path d="M5.5 32.2H16M57 38.2H67" stroke="#d0d0d0" stroke-width=".6"/><path d="M5.5 34.8H16M57 40.8H67" stroke="#d0d0d0" stroke-width=".6"/><path d="M5.5 37.4H16M57 43.4H67" stroke="#d0d0d0" stroke-width=".6"/><path d="M5.5 40H16M57 46H67" stroke="#d0d0d0" stroke-width=".6"/><path d="M5.5 42.6H16M57 48.6H67" stroke="#d0d0d0" stroke-width=".6"/><path d="M24 11.5v6M20 47v7" stroke="#cfcfcf" stroke-width=".7"/><path d="M26.5 11.5v6M22.5 47v7" stroke="#cfcfcf" stroke-width=".7"/><path d="M29 11.5v6M25 47v7" stroke="#cfcfcf" stroke-width=".7"/><path d="M31.5 11.5v6M27.5 47v7" stroke="#cfcfcf" stroke-width=".7"/><path d="M34 11.5v6M30 47v7" stroke="#cfcfcf" stroke-width=".7"/><path d="M36.5 11.5v6M32.5 47v7" stroke="#cfcfcf" stroke-width=".7"/><path d="M39 11.5v6M35 47v7" stroke="#cfcfcf" stroke-width=".7"/><path d="M41.5 11.5v6M37.5 47v7" stroke="#cfcfcf" stroke-width=".7"/><path d="M44 11.5v6M40 47v7" stroke="#cfcfcf" stroke-width=".7"/><path d="M46.5 11.5v6M42.5 47v7" stroke="#cfcfcf" stroke-width=".7"/><path d="M49 11.5v6M45 47v7" stroke="#cfcfcf" stroke-width=".7"/><path d="M51.5 11.5v6M47.5 47v7" stroke="#cfcfcf" stroke-width=".7"/><path d="M54 11.5v6M50 47v7" stroke="#cfcfcf" stroke-width=".7"/><path d="M56.5 11.5v6M52.5 47v7" stroke="#cfcfcf" stroke-width=".7"/><path d="M8 30c6-10 20-14 34-12c10 2 18 8 20 14c-2 6-10 10-20 10c-12 0-26-4-34-12z" stroke="#b0b0b0" stroke-width="1"/><path d="M10 30l8 4l8-6l8 4l10-4l10 6M14 26c6 6 10 10 18 12M30 22l6 8l8 8M44 24l6 10" stroke="#777" stroke-width="1.4"/><path d="M12 28l6 6M22 30l6 4M36 30l8 6" stroke="#444" stroke-width="1.3"/></g><rect x="60" y="12" width="7" height="1" fill="#ccc"/><rect x="5.5" y="56" width="1" height="1" fill="#666"/><rect x="7.5" y="56" width="17" height="1" fill="#555"/><rect x="38.5" y="56" width="1" height="1" fill="#666"/><rect x="40.5" y="56" width="24" height="1" fill="#555"/><rect x="5.5" y="59" width="1" height="1.7" fill="#666"/><rect x="7.5" y="59" width="14" height="1.7" fill="#1a1a1a"/><rect x="38.5" y="59" width="1" height="1.7" fill="#666"/><rect x="40.5" y="59" width="10" height="1.7" fill="#1a1a1a"/><rect x="5.5" y="62.1" width="1" height="1.7" fill="#666"/><rect x="7.5" y="62.1" width="15" height="1.7" fill="#1a1a1a"/><rect x="38.5" y="62.1" width="1" height="1.7" fill="#666"/><rect x="40.5" y="62.1" width="8" height="1.7" fill="#1a1a1a"/><rect x="5.5" y="65.2" width="1" height="1.7" fill="#666"/><rect x="7.5" y="65.2" width="16" height="1.7" fill="#1a1a1a"/><rect x="38.5" y="65.2" width="1" height="1.7" fill="#666"/><rect x="40.5" y="65.2" width="22" height="1.7" fill="#1a1a1a"/><rect x="5.5" y="68.2" width="1" height="1.7" fill="#666"/><rect x="7.5" y="68.2" width="18" height="1.7" fill="#1a1a1a"/><rect x="38.5" y="68.2" width="1" height="1.7" fill="#666"/><rect x="40.5" y="68.2" width="8" height="1.7" fill="#1a1a1a"/><rect x="5.5" y="71.2" width="1" height="1" fill="#666"/><rect x="7.5" y="71.2" width="10" height="1" fill="#555"/><rect x="38.5" y="71.2" width="1" height="1" fill="#666"/><rect x="40.5" y="71.2" width="9" height="1" fill="#555"/><rect x="5.5" y="74.3" width="1" height="1" fill="#666"/><rect x="7.5" y="74.3" width="13" height="1" fill="#555"/><rect x="5.5" y="77.3" width="1" height="1.7" fill="#666"/><rect x="7.5" y="77.3" width="12" height="1.7" fill="#1a1a1a"/><rect x="38.5" y="77.3" width="1" height="1.7" fill="#666"/><rect x="40.5" y="77.3" width="6" height="1.7" fill="#1a1a1a"/><rect x="5.5" y="80.4" width="1" height="1.7" fill="#666"/><rect x="7.5" y="80.4" width="11" height="1.7" fill="#1a1a1a"/><rect x="38.5" y="80.4" width="1" height="1.7" fill="#666"/><rect x="40.5" y="80.4" width="9" height="1.7" fill="#1a1a1a"/><rect x="5.5" y="83.5" width="1" height="1" fill="#666"/><rect x="7.5" y="83.5" width="8" height="1" fill="#555"/><rect x="38.5" y="83.5" width="1" height="1" fill="#666"/><rect x="40.5" y="83.5" width="7" height="1" fill="#555"/><rect x="31" y="95.7" width="12" height="1.1" fill="#222"/><rect x="5.5" y="96.5" width="2.6" height="1.2" fill="#555"/></svg></div>
<div class="tl" style="left:337px;top:952.8px;">30</div>
<div class="thumb" style="left:130px;top:991.3px;"><svg width="72" height="103" viewBox="0 0 72 103" style="filter:blur(.3px)" shape-rendering="auto"><rect x="4" y="4.2" width="63.5" height="0.9" fill="#000"/><path d="M65.5 3L68 5.2H65.5Z" fill="#000"/><rect x="4" y="6.4" width="64" height="2.9" fill="#000"/><rect x="20" y="7.5" width="46" height="0.6" fill="#777"/><g fill="none" stroke-linecap="round"><path d="M5.5 14H16M57 20H67" stroke="#d0d0d0" stroke-width=".6"/><path d="M5.5 16.6H16M57 22.6H67" stroke="#d0d0d0" stroke-width=".6"/><path d="M5.5 19.2H16M57 25.2H67" stroke="#d0d0d0" stroke-width=".6"/><path d="M5.5 21.8H16M57 27.8H67" stroke="#d0d0d0" stroke-width=".6"/><path d="M5.5 24.4H16M57 30.4H67" stroke="#d0d0d0" stroke-width=".6"/><path d="M5.5 27H16M57 33H67" stroke="#d0d0d0" stroke-width=".6"/><path d="M5.5 29.6H16M57 35.6H67" stroke="#d0d0d0" stroke-width=".6"/><path d="M5.5 32.2H16M57 38.2H67" stroke="#d0d0d0" stroke-width=".6"/><path d="M5.5 34.8H16M57 40.8H67" stroke="#d0d0d0" stroke-width=".6"/><path d="M5.5 37.4H16M57 43.4H67" stroke="#d0d0d0" stroke-width=".6"/><path d="M5.5 40H16M57 46H67" stroke="#d0d0d0" stroke-width=".6"/><path d="M5.5 42.6H16M57 48.6H67" stroke="#d0d0d0" stroke-width=".6"/><path d="M24 11.5v6M20 47v7" stroke="#cfcfcf" stroke-width=".7"/><path d="M26.5 11.5v6M22.5 47v7" stroke="#cfcfcf" stroke-width=".7"/><path d="M29 11.5v6M25 47v7" stroke="#cfcfcf" stroke-width=".7"/><path d="M31.5 11.5v6M27.5 47v7" stroke="#cfcfcf" stroke-width=".7"/><path d="M34 11.5v6M30 47v7" stroke="#cfcfcf" stroke-width=".7"/><path d="M36.5 11.5v6M32.5 47v7" stroke="#cfcfcf" stroke-width=".7"/><path d="M39 11.5v6M35 47v7" stroke="#cfcfcf" stroke-width=".7"/><path d="M41.5 11.5v6M37.5 47v7" stroke="#cfcfcf" stroke-width=".7"/><path d="M44 11.5v6M40 47v7" stroke="#cfcfcf" stroke-width=".7"/><path d="M46.5 11.5v6M42.5 47v7" stroke="#cfcfcf" stroke-width=".7"/><path d="M49 11.5v6M45 47v7" stroke="#cfcfcf" stroke-width=".7"/><path d="M51.5 11.5v6M47.5 47v7" stroke="#cfcfcf" stroke-width=".7"/><path d="M54 11.5v6M50 47v7" stroke="#cfcfcf" stroke-width=".7"/><path d="M56.5 11.5v6M52.5 47v7" stroke="#cfcfcf" stroke-width=".7"/><path d="M8 30c6-10 20-14 34-12c10 2 18 8 20 14c-2 6-10 10-20 10c-12 0-26-4-34-12z" stroke="#b0b0b0" stroke-width="1"/><path d="M10 30l8 4l8-6l8 4l10-4l10 6M14 26c6 6 10 10 18 12M30 22l6 8l8 8M44 24l6 10" stroke="#777" stroke-width="1.4"/><path d="M12 28l6 6M22 30l6 4M36 30l8 6" stroke="#444" stroke-width="1.3"/></g><rect x="60" y="12" width="7" height="1" fill="#ccc"/><rect x="5.5" y="56" width="1" height="1" fill="#666"/><rect x="7.5" y="56" width="17" height="1" fill="#555"/><rect x="38.5" y="56" width="1" height="1" fill="#666"/><rect x="40.5" y="56" width="24" height="1" fill="#555"/><rect x="5.5" y="59" width="1" height="1.7" fill="#666"/><rect x="7.5" y="59" width="14" height="1.7" fill="#1a1a1a"/><rect x="38.5" y="59" width="1" height="1.7" fill="#666"/><rect x="40.5" y="59" width="10" height="1.7" fill="#1a1a1a"/><rect x="5.5" y="62.1" width="1" height="1.7" fill="#666"/><rect x="7.5" y="62.1" width="15" height="1.7" fill="#1a1a1a"/><rect x="38.5" y="62.1" width="1" height="1.7" fill="#666"/><rect x="40.5" y="62.1" width="8" height="1.7" fill="#1a1a1a"/><rect x="5.5" y="65.2" width="1" height="1.7" fill="#666"/><rect x="7.5" y="65.2" width="16" height="1.7" fill="#1a1a1a"/><rect x="38.5" y="65.2" width="1" height="1.7" fill="#666"/><rect x="40.5" y="65.2" width="22" height="1.7" fill="#1a1a1a"/><rect x="5.5" y="68.2" width="1" height="1.7" fill="#666"/><rect x="7.5" y="68.2" width="18" height="1.7" fill="#1a1a1a"/><rect x="38.5" y="68.2" width="1" height="1.7" fill="#666"/><rect x="40.5" y="68.2" width="8" height="1.7" fill="#1a1a1a"/><rect x="5.5" y="71.2" width="1" height="1" fill="#666"/><rect x="7.5" y="71.2" width="10" height="1" fill="#555"/><rect x="38.5" y="71.2" width="1" height="1" fill="#666"/><rect x="40.5" y="71.2" width="9" height="1" fill="#555"/><rect x="5.5" y="74.3" width="1" height="1" fill="#666"/><rect x="7.5" y="74.3" width="13" height="1" fill="#555"/><rect x="5.5" y="77.3" width="1" height="1.7" fill="#666"/><rect x="7.5" y="77.3" width="12" height="1.7" fill="#1a1a1a"/><rect x="38.5" y="77.3" width="1" height="1.7" fill="#666"/><rect x="40.5" y="77.3" width="6" height="1.7" fill="#1a1a1a"/><rect x="5.5" y="80.4" width="1" height="1.7" fill="#666"/><rect x="7.5" y="80.4" width="11" height="1.7" fill="#1a1a1a"/><rect x="38.5" y="80.4" width="1" height="1.7" fill="#666"/><rect x="40.5" y="80.4" width="9" height="1.7" fill="#1a1a1a"/><rect x="5.5" y="83.5" width="1" height="1" fill="#666"/><rect x="7.5" y="83.5" width="8" height="1" fill="#555"/><rect x="38.5" y="83.5" width="1" height="1" fill="#666"/><rect x="40.5" y="83.5" width="7" height="1" fill="#555"/><rect x="30" y="95.7" width="12" height="1.1" fill="#222"/><rect x="65" y="96.2" width="2.6" height="1.4" fill="#333"/></svg></div>
<div class="tl" style="left:146px;top:1102.8px;">31</div>
<div class="thumb" style="left:321px;top:991.3px;"><svg width="72" height="103" viewBox="0 0 72 103" style="filter:blur(.3px)" shape-rendering="auto"><rect x="5.5" y="3.3" width="31" height="1.3" fill="#111"/><rect x="5.5" y="4.9" width="63.5" height="0.5" fill="#333"/><rect x="5.2" y="6.8" width="63.6" height="2.9" fill="#000"/><rect x="20" y="7.8" width="46" height="0.6" fill="#777"/><g fill="none" stroke-linecap="round"><path d="M5.5 14H16M57 20H67" stroke="#d0d0d0" stroke-width=".6"/><path d="M5.5 16.6H16M57 22.6H67" stroke="#d0d0d0" stroke-width=".6"/><path d="M5.5 19.2H16M57 25.2H67" stroke="#d0d0d0" stroke-width=".6"/><path d="M5.5 21.8H16M57 27.8H67" stroke="#d0d0d0" stroke-width=".6"/><path d="M5.5 24.4H16M57 30.4H67" stroke="#d0d0d0" stroke-width=".6"/><path d="M5.5 27H16M57 33H67" stroke="#d0d0d0" stroke-width=".6"/><path d="M5.5 29.6H16M57 35.6H67" stroke="#d0d0d0" stroke-width=".6"/><path d="M5.5 32.2H16M57 38.2H67" stroke="#d0d0d0" stroke-width=".6"/><path d="M5.5 34.8H16M57 40.8H67" stroke="#d0d0d0" stroke-width=".6"/><path d="M5.5 37.4H16M57 43.4H67" stroke="#d0d0d0" stroke-width=".6"/><path d="M5.5 40H16M57 46H67" stroke="#d0d0d0" stroke-width=".6"/><path d="M5.5 42.6H16M57 48.6H67" stroke="#d0d0d0" stroke-width=".6"/><path d="M24 11.5v6M20 47v7" stroke="#cfcfcf" stroke-width=".7"/><path d="M26.5 11.5v6M22.5 47v7" stroke="#cfcfcf" stroke-width=".7"/><path d="M29 11.5v6M25 47v7" stroke="#cfcfcf" stroke-width=".7"/><path d="M31.5 11.5v6M27.5 47v7" stroke="#cfcfcf" stroke-width=".7"/><path d="M34 11.5v6M30 47v7" stroke="#cfcfcf" stroke-width=".7"/><path d="M36.5 11.5v6M32.5 47v7" stroke="#cfcfcf" stroke-width=".7"/><path d="M39 11.5v6M35 47v7" stroke="#cfcfcf" stroke-width=".7"/><path d="M41.5 11.5v6M37.5 47v7" stroke="#cfcfcf" stroke-width=".7"/><path d="M44 11.5v6M40 47v7" stroke="#cfcfcf" stroke-width=".7"/><path d="M46.5 11.5v6M42.5 47v7" stroke="#cfcfcf" stroke-width=".7"/><path d="M49 11.5v6M45 47v7" stroke="#cfcfcf" stroke-width=".7"/><path d="M51.5 11.5v6M47.5 47v7" stroke="#cfcfcf" stroke-width=".7"/><path d="M54 11.5v6M50 47v7" stroke="#cfcfcf" stroke-width=".7"/><path d="M56.5 11.5v6M52.5 47v7" stroke="#cfcfcf" stroke-width=".7"/><path d="M8 30c6-10 20-14 34-12c10 2 18 8 20 14c-2 6-10 10-20 10c-12 0-26-4-34-12z" stroke="#b0b0b0" stroke-width="1"/><path d="M10 30l8 4l8-6l8 4l10-4l10 6M14 26c6 6 10 10 18 12M30 22l6 8l8 8M44 24l6 10" stroke="#777" stroke-width="1.4"/><path d="M12 28l6 6M22 30l6 4M36 30l8 6" stroke="#444" stroke-width="1.3"/></g><rect x="60" y="12" width="7" height="1" fill="#ccc"/><rect x="5.5" y="56" width="1" height="1" fill="#666"/><rect x="7.5" y="56" width="17" height="1" fill="#555"/><rect x="38.5" y="56" width="1" height="1" fill="#666"/><rect x="40.5" y="56" width="24" height="1" fill="#555"/><rect x="5.5" y="59" width="1" height="1.7" fill="#666"/><rect x="7.5" y="59" width="14" height="1.7" fill="#1a1a1a"/><rect x="38.5" y="59" width="1" height="1.7" fill="#666"/><rect x="40.5" y="59" width="10" height="1.7" fill="#1a1a1a"/><rect x="5.5" y="62.1" width="1" height="1.7" fill="#666"/><rect x="7.5" y="62.1" width="15" height="1.7" fill="#1a1a1a"/><rect x="38.5" y="62.1" width="1" height="1.7" fill="#666"/><rect x="40.5" y="62.1" width="8" height="1.7" fill="#1a1a1a"/><rect x="5.5" y="65.2" width="1" height="1.7" fill="#666"/><rect x="7.5" y="65.2" width="16" height="1.7" fill="#1a1a1a"/><rect x="38.5" y="65.2" width="1" height="1.7" fill="#666"/><rect x="40.5" y="65.2" width="22" height="1.7" fill="#1a1a1a"/><rect x="5.5" y="68.2" width="1" height="1.7" fill="#666"/><rect x="7.5" y="68.2" width="18" height="1.7" fill="#1a1a1a"/><rect x="38.5" y="68.2" width="1" height="1.7" fill="#666"/><rect x="40.5" y="68.2" width="8" height="1.7" fill="#1a1a1a"/><rect x="5.5" y="71.2" width="1" height="1" fill="#666"/><rect x="7.5" y="71.2" width="10" height="1" fill="#555"/><rect x="38.5" y="71.2" width="1" height="1" fill="#666"/><rect x="40.5" y="71.2" width="9" height="1" fill="#555"/><rect x="5.5" y="74.3" width="1" height="1" fill="#666"/><rect x="7.5" y="74.3" width="13" height="1" fill="#555"/><rect x="5.5" y="77.3" width="1" height="1.7" fill="#666"/><rect x="7.5" y="77.3" width="12" height="1.7" fill="#1a1a1a"/><rect x="38.5" y="77.3" width="1" height="1.7" fill="#666"/><rect x="40.5" y="77.3" width="6" height="1.7" fill="#1a1a1a"/><rect x="5.5" y="80.4" width="1" height="1.7" fill="#666"/><rect x="7.5" y="80.4" width="11" height="1.7" fill="#1a1a1a"/><rect x="38.5" y="80.4" width="1" height="1.7" fill="#666"/><rect x="40.5" y="80.4" width="9" height="1.7" fill="#1a1a1a"/><rect x="5.5" y="83.5" width="1" height="1" fill="#666"/><rect x="7.5" y="83.5" width="8" height="1" fill="#555"/><rect x="38.5" y="83.5" width="1" height="1" fill="#666"/><rect x="40.5" y="83.5" width="7" height="1" fill="#555"/><rect x="31" y="95.7" width="12" height="1.1" fill="#222"/><rect x="5.5" y="96.5" width="2.6" height="1.2" fill="#555"/></svg></div>
<div class="tl" style="left:337px;top:1102.8px;">32</div>
<svg id="icons" width="1910" height="1031" viewBox="0 0 1910 1031" fill="none" stroke="#6b6b6b" stroke-width="1.8" stroke-linecap="round" stroke-linejoin="round">
<!-- title bar -->
<g stroke="none">
<path d="M4 2.5h10l4 4v12h-14z" fill="#f4f4f4"/>
<path d="M2.5 2.5h9v7h-9z" fill="#d42a1f"/>
<path d="M8 16c2.5-2 3.5-5 3.5-7.5c0-1-1.5-1-1.5c0 2.5 3 4 5 4.5c1 .3 1-1 0-1c-2.5 0-6 1.5-7.5 3z" fill="none" stroke="#e0453a" stroke-width="1.1"/>
</g>
<g stroke="#fff" stroke-width="1.1" stroke-linecap="butt" stroke-linejoin="miter">
<path d="M1799 10.5h10.5"/>
<path d="M1844.5 7.5h7.5v7.5h-7.5zM1847 7.5v-2.5h7.5v7.5h-2.5"/>
<path d="M1890 5l10.5 10.5M1900.5 5l-10.5 10.5" stroke-width="1.3"/>
</g>
<!-- tab close -->
<path d="M315.5 58.5l6 6M321.5 58.5l-6 6" stroke="#555" stroke-width="2" stroke-linecap="butt"/>
<!-- right top -->
<g>
<path d="M1785 53.5h16.5a1.5 1.5 0 0 1 1.5 1.5v11a1.5 1.5 0 0 1-1.5 1.5h-8l-5 4.5v-4.5h-3.5a1.5 1.5 0 0 1-1.5-1.5v-11a1.5 1.5 0 0 1 1.5-1.5z" fill="#707070" stroke="none"/>
<circle cx="1788" cy="60.5" r="1.1" fill="#fff" stroke="none"/><circle cx="1793" cy="60.5" r="1.1" fill="#fff" stroke="none"/><circle cx="1798" cy="60.5" r="1.1" fill="#fff" stroke="none"/>
<circle cx="1823.5" cy="61.5" r="9.3" stroke-width="2"/>
<text x="1823.5" y="66.3" font-size="13.5" font-weight="bold" fill="#6b6b6b" stroke="none" text-anchor="middle">?</text>
</g>
<!-- toolbar -->
<g stroke="#b4b4b4" stroke-width="1.7">
<path d="M16 94h13.5l4.5 4.5v13.5h-18z"/>
<path d="M21 94v5.5h7.5v-5.5" />
<path d="M20.5 112v-6.5h9.5v6.5" fill="#dcdcdc"/>
</g>
<g>
<path d="M64 108C60 108 57.5 106 57.5 103C57.5 100.5 59.5 98.5 62 98.5C62.5 95.5 65 93.7 68 93.7C71.5 93.7 74 95.5 74.5 98.5C77 98.5 79 100.5 79 103.5C79 106 77 108 74 108L72 108"/>
<path d="M68 113.5v-10.5M64.3 106.2l3.7-3.7l3.7 3.7"/>
</g>
<g>
<rect x="99.5" y="98.5" width="21" height="9.5" rx="1.5" fill="#6b6b6b"/>
<rect x="103.5" y="92.8" width="13" height="6" fill="#fafafa"/>
<rect x="103.3" y="103.5" width="13.5" height="9.3" fill="#fafafa"/>
<path d="M106.5 107h7M106.5 109.8h7" stroke-width="1"/>
</g>
<g stroke-linejoin="miter">
<rect x="144" y="95" width="20.2" height="15.2"/>
<path d="M144 95l10.1 9l10.1-9M144 110l7.5-7M164.2 110l-7.5-7" stroke-width="1.4"/>
</g>
<g>
<rect x="185.5" y="91.5" width="23" height="22.5" fill="#dedede" stroke="#555" stroke-width="1" stroke-dasharray="2 1.5" stroke-linecap="butt"/>
<path d="M190 99h3.5l1.5-2.5h5l1.5 2.5h3.5v10.5h-15z" fill="#fafafa" stroke="#555"/>
<circle cx="197.5" cy="104" r="2.6" stroke="#555"/>
</g>
<g>
<circle cx="238" cy="101.3" r="7.6" stroke-width="2"/>
<path d="M243.7 107.2l5.5 5.3" stroke-width="2.6"/>
</g>
<path d="M271.5 89v28M450.5 89v30M891.5 89v30" stroke="#d4d4d4" stroke-width="1" stroke-linecap="butt"/>
<g>
<circle cx="303" cy="103" r="9.4"/>
<path d="M303 108.5v-11M298.7 101.5l4.3-4.3l4.3 4.3"/>
<circle cx="335" cy="103" r="9.4"/>
<path d="M335 97.5v11M330.7 104.5l4.3 4.3l4.3-4.3"/>
</g>
<path d="M477.3 92.3v16.4l4.2-3.7l3.2 7.3l2.7-1.2l-3.2-7.2l5.3-.4z" fill="#1b6fc6" stroke="#1b6fc6" stroke-width=".6"/>
<g stroke-width="1.7" transform="translate(514 0) scale(1.13 1) translate(-514 0)">
<path d="M520.5 105v-8.5a1.5 1.5 0 0 1 3 0v-2.8a1.5 1.5 0 0 1 3 0v.8M523.5 96.5v6M526.5 93.8v8.5M526.5 94.5a1.5 1.5 0 0 1 3 0v8M529.5 96.5a1.5 1.5 0 0 1 3 0v10.5c0 5-3 7.5-7.5 7.5c-3.5 0-5.5-1.5-7.5-4.5l-3-5c-.8-1.5 0-2.5 1.2-2.6c1.2 0 1.8.6 2.5 1.6l1.8 2.5"/>
</g>
<g>
<circle cx="567.5" cy="102.5" r="9.4"/>
<path d="M562.5 102.5h10" stroke-width="2"/>
<circle cx="600" cy="102.5" r="9.4" stroke="#2c6aa5" stroke-width="2"/>
<path d="M595 102.5h10M600 97.5v10" stroke="#2c6aa5" stroke-width="2"/>
</g>
<path d="M684 101h8l-4 4.6z" fill="#6b6b6b" stroke="none"/>
<g stroke-linejoin="miter" stroke-linecap="butt">
<path d="M723 91v6.5h15.5v-6.5" stroke-width="2"/>
<path d="M723 115v-12.5h10l5.5 5.5v7" stroke-width="2"/>
<path d="M732.5 103v5.5h5.5" stroke-width="1.4"/>
<path d="M726.5 112.5h9.5M728.5 110.5l-2 2l2 2M734 110.5l2 2l-2 2" stroke-width="1.2"/>
</g>
<g stroke-linejoin="miter">
<path d="M766 93h11l5.5 5.5v14h-16.5z" stroke-width="2"/>
<path d="M777 93.5v5h5" stroke-width="1.4"/>
<path d="M774 98.5v9.5M769 103.3h10M772.5 100l1.5-1.8l1.5 1.8M772.5 106.5l1.5 1.8l1.5-1.8M770.7 101.8l-1.8 1.5l1.8 1.5M777.3 101.8l1.8 1.5l-1.8 1.5" stroke-width="1.1"/>
</g>
<g stroke-linejoin="miter">
<rect x="808" y="93" width="18.5" height="18.5" stroke-width="2"/>
<path d="M808 94.2h18.5" stroke-width="2.6" stroke-linecap="butt"/>
<path d="M819 101l4.5-4.5M820 96.5h3.5v3.5M815.5 104l-4.5 4.5M811 105v3.5h3.5" stroke-width="1.7"/>
<path d="M820.5 96.5h3v3zM811 105.5v3h3z" fill="#6b6b6b" stroke-width="1"/>
</g>
<g>
<rect x="850" y="94" width="20.5" height="7.3" rx="1" stroke-linejoin="miter"/>
<path d="M854 97.7h1M858 97.7h1M862 97.7h1M866 97.7h1" stroke-width="1.6" stroke-linecap="butt"/>
<path d="M860 104v9M855.5 108.7l4.5 4.5l4.5-4.5"/>
</g>
<g>
<path d="M923 93.5c6 0 10.5 3.6 10.5 8.3s-4.5 8.2-10.5 8.2c-1.2 0-2.4-.1-3.4-.4l-5.1 3.4l1.2-5c-2-1.5-3.2-3.7-3.2-6.2c0-4.7 4.5-8.3 10.5-8.3z" fill="#e2e2e2"/>
<path d="M917.5 100h11.5M918.5 102.7h8.5" stroke-width="1"/>
</g>
<g>
<rect x="961.5" y="109.8" width="15.5" height="3.2" fill="#d8d8d8" stroke="none"/>
<path d="M960.5 107.5l11.5-13c.8-.9 2-.9 2.9-.1l.7.6c.9.8.9 2 .1 2.9l-11.5 13z" fill="#e2e2e2"/>
<path d="M960.5 107.5l3.7 3.4M955 112.5l5.5-5l3.7 3.4l-3.7 1.7z" fill="#6b6b6b"/>
</g>
<!-- left strip -->
<g stroke="#2566a8" stroke-width="2">
<path d="M20 150.5h-4a1.5 1.5 0 0 0-1.5 1.5v11.5a1.5 1.5 0 0 0 1.5 1.5h9a1.5 1.5 0 0 0 1.5-1.5v-2.5" fill="#e2efff"/>
<path d="M21.5 145h6l5 5v9.5a1.5 1.5 0 0 1-1.5 1.5h-9.5a1.5 1.5 0 0 1-1.5-1.5v-13a1.5 1.5 0 0 1 1.5-1.5z" fill="#e2efff"/>
<path d="M27.5 145.5v5h5" stroke-width="1.5"/>
</g>
<path d="M44.5 146l-6.5 8l6.5 8" stroke="#d8d8d8" stroke-width="1" fill="#fafafa"/>
<path d="M16 182h12.5v20.5l-6.2-5.8l-6.3 5.8z" stroke-width="2" stroke-linejoin="miter"/>
<path d="M30.5 227L21 236.3C18.5 238.8 15 238.8 13.3 236.7C11.5 234.5 11.8 231.5 14 229.3L24 219.2C25.8 217.4 28.3 217.4 29.8 219C31.3 220.6 31.2 222.8 29.6 224.4L20.2 233.7C19.3 234.6 18 234.6 17.3 233.8C16.5 233 16.6 231.8 17.5 230.9L25.5 223" stroke-width="2"/>
<!-- panel header -->
<path d="M461.5 139.5l14.5 14.5M476 139.5l-14.5 14.5" stroke-width="1.5" stroke-linecap="butt"/>
<g stroke-linejoin="miter">
<rect x="64" y="182" width="18.5" height="15.5" stroke-width="2"/>
<path d="M67 186h3.2v3h-3.2zM67 191.2h3.2v3h-3.2z" fill="#6b6b6b" stroke="none"/>
<path d="M72.5 187.5h6.5M72.5 192.7h6.5" stroke-width="1.7" stroke-linecap="butt"/>
<path d="M85 188.5h7.5l-3.750 4.3z" fill="#6b6b6b" stroke="none"/>
</g>
<path d="M103.5 175v30" stroke="#d4d4d4" stroke-width="1" stroke-linecap="butt"/>
<g>
<path d="M121.5 182.5h20.5" stroke-width="2"/>
<path d="M128 182v-2.5h7.5v2.5"/>
<path d="M124.5 183.5l1.3 15.5h12l1.3-15.5" stroke-width="2"/>
<path d="M129 186.5v9.5M131.8 186.5v9.5M134.6 186.5v9.5" stroke-width="1"/>
</g>
<g stroke-linejoin="miter" stroke-linecap="butt">
<path d="M157 179v5.5h15.5v-5.5" stroke-width="2"/>
<path d="M156.5 188h17" stroke-width="1.6" stroke-dasharray="1.5 1"/>
<path d="M157 200v-8h10l5.5 5.5v2.5" stroke-width="2"/>
<path d="M166.5 192.5v5h5.5" stroke-width="1.5"/>
</g>
<g stroke-width="2">
<path d="M204.5 197.5a9 9 0 1 0-13.5-6.5"/>
<path d="M188.5 191.5l2.8 5.5l5-3.5z" fill="#6b6b6b" stroke-width="1"/>
<path d="M227 197.5a9 9 0 1 1 13.5-6.5"/>
<path d="M243 191.5l-2.8 5.5l-5-3.5z" fill="#6b6b6b" stroke-width="1"/>
</g>
<path d="M336 195.5l3.5-5l2 2.3l3-4.5l4.8 7.2z" fill="#6b6b6b" stroke="#6b6b6b" stroke-width=".8"/>
<rect x="379" y="186.5" width="65" height="3.5" fill="#e0e0e0" stroke="none"/>
<path d="M369 181h9.2v11l-4.6 4.3l-4.6-4.3z" fill="#0b78d8" stroke="none"/>
<path d="M458 195.5l6.5-9l3.5 4.5l5-8l8.5 12.5z" fill="#6b6b6b" stroke="#6b6b6b" stroke-width=".8"/>
<!-- scroll arrows -->
<path d="M479 230.5l4-4l4 4" stroke="#333" stroke-width="1.8" stroke-linecap="butt" stroke-linejoin="miter"/>
<path d="M479 1025.5l3.7 4l3.7-4" stroke="#333" stroke-width="1.8" stroke-linecap="butt" stroke-linejoin="miter"/>
<path d="M1896 146l3.7-4l3.7 4" stroke="#444" stroke-width="1.5" stroke-linecap="butt" stroke-linejoin="miter"/>
<path d="M1896 1029l4 4l4-4" stroke="#444" stroke-width="1.5" stroke-linecap="butt" stroke-linejoin="miter"/>
<path d="M507 577v12l-6-6z" fill="#555" stroke="none"/>
</svg>
<svg id="drawing" width="1910" height="1031" viewBox="0 0 1910 1031" fill="none" stroke="#000" stroke-linecap="round" stroke-linejoin="round">
<defs><clipPath id="pageclip"><rect x="632" y="127" width="1136" height="904"/></clipPath></defs>
<g clip-path="url(#pageclip)">
<!-- headings -->
<g stroke="none" fill="#000" font-weight="bold">
<text x="719.3" y="208.8" font-size="28.5" xml:space="preserve">G  ELECTRICAL WIRING ROUTING</text>
<text x="762.6" y="261.7" font-size="26.42">: Location of Connector Joining Wire Harness and Wire Harness</text>
<text x="762.6" y="296.7" font-size="26.42">: Location of Ground Points</text>
<text x="762.6" y="952.2" font-size="26.42">: Location of Splice Points</text>
</g>
<path d="M713 219.2H1703" stroke-width="3.6" stroke-linecap="butt"/>
<g stroke-width="1.2" stroke-linecap="butt" stroke-linejoin="miter">
<path d="M713.5 237.5H1702.5V306.5H713.5ZM713.5 272.5H1702.5"/>
<path d="M713.5 928.5H1702.5V961.5H713.5Z"/>
</g>
<rect x="723.5" y="245.5" width="28" height="18" rx="2" stroke-width="3.2"/>
<path d="M721.5 276.5H751.5L736.5 302Z" stroke-width="1.7" stroke-linejoin="miter"/>
<path d="M731 933.5H741.5L748.5 940.5V950L741.5 957H731L724.5 950V940.5Z" stroke-width="2.6" stroke-linejoin="miter"/>
<!-- ground triangles -->
<g stroke-width="3.4" stroke-linejoin="miter" stroke-linecap="butt">
<path d="M968.7 324.4H1013.9L991.3 364.1Z"/>
<path d="M1649.9 563.7H1695.1L1672.5 603.4Z"/>
<path d="M1649.9 780.7H1695.1L1672.5 820.4Z"/>
<path d="M1165.3 869.0H1210.5L1187.9 908.7Z"/>
<rect x="879.8" y="882.3" width="45.7" height="26.7"/>
<rect x="1256.6" y="882.3" width="46" height="26.7"/>
<path d="M1050.5 978.3H1068L1078.5 988.6V1005.6L1068 1016H1050.5L1040 1005.6V988.6Z"/>
<path d="M1104 978.3H1121.5L1132 988.6V1005.6L1121.5 1016H1104L1093.5 1005.6V988.6Z"/>
<path d="M1162 978.3H1179.5L1190 988.6V1005.6L1179.5 1016H1162L1151.5 1005.6V988.6Z"/>
</g>
<g stroke="none" fill="#000" font-weight="bold" font-size="18" text-anchor="middle">
<text x="992.8" y="343.6" transform="translate(992.8 0) scale(0.8 1) translate(-992.8 0)">BL</text>
<text x="1673.1" y="582.6" transform="translate(1673.1 0) scale(0.78 1) translate(-1673.1 0)">BN</text>
<text x="1673.3" y="799.4" transform="translate(1673.3 0) scale(0.8 1) translate(-1673.3 0)">BM</text>
<text x="1188.4" y="888" transform="translate(1188.4 0) scale(0.75 1) translate(-1188.4 0)">BK</text>
</g>
<g stroke="none" fill="#000" font-weight="bold" font-size="18" text-anchor="middle">
<text x="902.4" y="901.8">BA1</text>
<text x="1279.3" y="901.8">BB1</text>
</g>
<g stroke="none" fill="#000" font-size="18" text-anchor="middle">
<text x="1059.6" y="1003.7">B3</text>
<text x="1112.9" y="1003.7">B4</text>
<text x="1170.8" y="1003.7">B5</text>
</g>
<!-- labels -->
<g stroke="none" fill="#000" font-size="19.2">
<text x="1076.5" y="340.5">Roof Wire</text>
<text x="1233" y="340.5">Front Door RH Wire</text>
<text x="712" y="481.3">Front Door</text>
<text x="712" y="500.3">LH Wire</text>
<text x="1608" y="452.3">Rear Door</text>
<text x="1608" y="471.3">No.1 Wire</text>
<text x="712" y="725.5">Floor No.1</text>
<text x="712" y="744.5">Wire</text>
<text x="1012" y="889.3">Rear Door</text>
<text x="1012" y="908.3">No.2 Wire</text>
<text x="1339.5" y="908">Floor No.2 Wire</text>
</g>
<!-- leader lines -->
<g stroke-width="1.5" stroke-linejoin="miter" stroke-linecap="butt">
<path d="M991.3 364V404L1070 478"/>
<path d="M1119.3 346V405L1112.5 424"/>
<path d="M1317.5 346V405L1215 509.5"/>
<path d="M802 482.2H832.5L950 558"/>
<path d="M1602.5 456.3H1568.3L1288 591.8"/>
<path d="M1659 584.5H1403"/>
<path d="M1659 800.8H1607.5L1453 747.5"/>
<path d="M802 726.5H832.5L940 645"/>
<path d="M902.5 881V826.7L1030 640"/>
<path d="M1056.2 872.5V690"/>
<path d="M1188.5 868V827.5L1137.4 642"/>
<path d="M1279.2 881V828L1266.3 582"/>
<path d="M1405.3 891.3V828.3L1306.8 636"/>
<path d="M1059.3 1017V1031M1112.5 1017V1031M1170.3 1017V1031"/>
</g>
<g stroke-width="1.15">
<path d="M856.7 494.2C858.9 493.5 859.5 492.6 870.1 489.6C880.6 486.6 900.9 481 920.1 476.2C939.3 471.5 974.3 463.6 985.2 461"/>
<path d="M856.7 494.2C855.3 495.2 851.1 496.9 848.4 500.1C845.6 503.3 842.2 508.4 840 513.4C837.8 518.4 836.1 524.5 835 530.1C833.9 535.7 833.2 541.2 833.3 546.8C833.5 552.3 834.5 557.9 835.8 563.5C837.2 569 839.5 575.7 841.7 580.2C843.9 584.6 847.9 588.5 849.2 590.2"/>
<path d="M859.2 496.7C861.8 496.6 869.4 495.8 875.1 495.9C880.8 496 887.6 496.6 893.4 497.6C899.2 498.5 907.3 501 910.1 501.7"/>
<path d="M854.2 511.4C856.8 512.2 864.3 514.1 870.1 515.9C875.8 517.8 885.3 521.5 888.4 522.6"/>
<path d="M906.8 529.8L925.9 537.6"/>
<path d="M846.7 590.2C846.8 587.1 846.6 577.9 847.2 571.8C847.7 565.7 848.7 558.4 850 553.5C851.3 548.5 853.1 544.7 855 542.1C857 539.6 859.2 538.4 861.7 538.1C864.2 537.8 867 538.1 870.1 540.1C873.1 542.1 877 546.2 880.1 550.1C883.1 554 885.9 558.5 888.4 563.5C890.9 568.5 893.3 573.7 895.1 580.2C896.9 586.6 898.6 598.4 899.2 602"/>
<path d="M850.9 602C850.9 598.4 850.4 586.6 850.9 580.2C851.3 573.7 852.1 567.9 853.4 563.5C854.6 559.1 856.1 556.2 858.4 553.8C860.6 551.3 863.9 549.2 866.7 548.8C869.5 548.4 872.6 549.8 875.1 551.5C877.6 553.1 880.6 557.3 881.7 558.5"/>
<path d="M857.5 602C857.7 598.9 857.9 588.5 858.7 583.5C859.5 578.5 860.9 574.4 862.5 571.8C864.2 569.3 866.3 568.6 868.4 568.1C870.5 567.7 873.9 569.1 875.1 569.3"/>
</g>
<g stroke-width="1.5">
<path d="M910.1 508.4C910.6 506.3 911.2 503.7 912.6 501.7C914 499.8 915 498.3 918.4 496.7C921.9 495.2 930.2 493 933.4 492.6C936.6 492.1 936.7 493.3 937.6 494.2C938.5 495.2 938.6 495.8 938.8 498.4C938.9 501 939.1 507.4 938.5 510.1C937.8 512.7 938.7 512.6 935.1 514.3C931.5 515.9 920.7 519.3 916.8 520.1C912.9 520.9 912.9 520.2 911.8 519.3C910.6 518.3 910 516.1 909.8 514.3C909.5 512.4 909.6 510.5 910.1 508.4Z"/>
<path d="M915.1 508.4C915.5 506 916.5 503.4 917.6 501.7C918.7 500.1 919.1 499.8 921.8 498.7C924.4 497.7 931.1 495.8 933.4 495.6C935.8 495.3 935.2 494.8 935.6 497.2C936 499.7 936.3 507.5 935.9 510.1C935.6 512.6 936.4 511.4 933.4 512.6C930.5 513.8 921.4 516.5 918.4 517.1C915.4 517.6 916 517.4 915.4 515.9C914.9 514.5 914.7 510.8 915.1 508.4Z"/>
</g>
<g stroke-width="1.6">
<path d="M930.9 509.7L934.8 505.1"/>
</g>
<g stroke-width="1.15">
<path d="M938.5 495.1C941 492.9 948.2 486 953.5 482.1C958.7 478.1 964.6 474.6 970.2 471.2C975.7 467.8 978.5 465.5 986.8 461.7C995.2 457.9 1009.1 452.4 1020.2 448.7C1031.3 445 1041.9 442.6 1053.6 439.5C1065.2 436.4 1084.2 431.6 1090.3 430"/>
<path d="M942.6 496.7C945 494.9 952.2 489.2 956.8 485.9C961.4 482.6 965.1 480 970.2 477C975.2 474.1 981.3 470.5 986.8 468C992.4 465.5 998.5 463.6 1003.5 462C1008.5 460.5 1012.4 459.4 1016.9 458.9C1021.3 458.3 1026 458.3 1030.2 458.7C1034.4 459.1 1038.4 460.2 1041.9 461.4C1045.4 462.6 1049.5 465.1 1051.1 465.9"/>
<path d="M954.3 487.6C953.9 489.1 953 493.3 951.8 496.7C950.5 500.2 948.3 505.2 946.8 508.4C945.3 511.6 943.3 514.7 942.6 515.9"/>
<path d="M935.1 515.1C933.7 517.3 929.3 524.5 926.8 528.4C924.3 532.3 921.9 535.4 920.1 538.4C918.3 541.5 917 543.7 915.9 546.8C914.8 549.8 914.1 552.6 913.4 556.8C912.8 561 912.2 566.5 912.1 571.8C912 577.1 912.2 583.5 912.6 588.5C913 593.5 914 599.8 914.3 602"/>
<path d="M1051.1 466.7L1013.5 545.1"/>
<path d="M1056.9 470.9L1021.9 546.8"/>
<path d="M1061.9 479.2L1031 553.5"/>
<path d="M1019.4 553.5C1018.1 555.1 1013.9 559.6 1011.9 563.5C1009.8 567.4 1008.1 572.4 1006.9 576.8C1005.6 581.3 1004.9 586 1004.4 590.2C1003.8 594.4 1003.7 600 1003.5 602"/>
<path d="M981 567.6L995.2 572.6L997.2 575.1L996.8 582.7L994.3 584.3L982.7 579.3L980.2 576L980.2 570.1Z"/>
<path d="M981 573.5L996.5 579"/>
</g>
<g stroke-width="3.0">
<path d="M941 495.9C943.3 494 950.3 487.8 955.1 484.2C960 480.6 964.9 477.5 970.2 474.2C975.4 470.9 981.3 467.4 986.8 464.5C992.4 461.7 998 459.3 1003.5 457C1009.1 454.8 1011.9 453.8 1020.2 451.2C1028.5 448.6 1042.4 444.5 1053.6 441.3C1064.7 438.2 1081.4 434 1086.9 432.5"/>
<path d="M1020.2 451.7C1022.4 452.1 1029.4 452.9 1033.5 454.2C1037.7 455.4 1041.3 457.2 1045.2 459.2C1049.1 461.1 1053.3 463.5 1056.9 465.9C1060.5 468.3 1065.2 472.4 1066.9 473.7"/>
<path d="M1061.9 465.9C1064.7 466.8 1073 470.3 1078.6 471.7C1084.2 473.1 1089.7 474 1095.3 474.4C1100.8 474.7 1104.9 474.4 1112 473.7C1119 473 1133.5 470.7 1137.8 470"/>
<path d="M1080.3 479.2C1078.6 480.2 1074.7 482.8 1070.3 485.1C1065.8 487.3 1059.1 490.2 1053.6 492.6C1048 494.9 1042.4 497.2 1036.9 499.2C1031.3 501.2 1025.8 503.1 1020.2 504.6C1014.6 506 1009.1 506.9 1003.5 507.9C998 508.9 991.8 509.4 986.8 510.4C981.8 511.4 977.1 512.6 973.5 513.8C969.9 514.9 966.5 516.5 965.1 517.1"/>
<path d="M941.8 536.8C945.1 535.7 955.7 532.3 961.8 530.4C967.9 528.5 972.9 527 978.5 525.4C984.1 523.9 989.6 522.6 995.2 521.3C1000.7 519.9 1006.3 518.7 1011.9 517.1C1017.4 515.5 1023.5 514 1028.5 511.7C1033.5 509.5 1037.7 506 1041.9 503.7C1046.1 501.4 1049.7 499.1 1053.6 497.9C1057.5 496.7 1061.9 496.4 1065.2 496.7C1068.6 497.1 1071.4 498.4 1073.6 500.1C1075.8 501.7 1077.2 504.5 1078.6 506.7C1080 509 1080.5 512.1 1081.9 513.8C1083.3 515.4 1083.3 516.2 1086.9 516.8C1090.5 517.3 1098.1 517.5 1103.6 517.1C1109.2 516.7 1114.6 515.4 1120.3 514.3C1126 513.1 1134.9 511.1 1137.8 510.4"/>
<path d="M1089.4 483.4C1089.9 485.1 1090.7 490.1 1091.9 493.4C1093.2 496.7 1095.3 500.1 1096.9 503.4C1098.6 506.7 1100.8 510.6 1101.9 513.4C1103.1 516.2 1103.9 518.1 1103.6 520.1C1103.3 522 1101.7 523.7 1100.3 525.1C1098.9 526.5 1096.5 527 1095.3 528.4C1094 529.8 1093.2 532.6 1092.8 533.4"/>
</g>
<g stroke-width="1.15">
<path d="M1070 434.2C1073.3 433.1 1083.1 429.5 1090 427.5C1097 425.6 1103.9 424 1111.7 422.5C1119.5 421 1128.4 419.7 1136.7 418.7C1145.1 417.7 1153.4 417.1 1161.8 416.7C1170.1 416.2 1179.8 416 1186.8 416C1193.7 416 1197.9 416.2 1203.5 416.7C1209 417.2 1211.8 417.4 1220.2 419.2C1228.5 421 1242.4 424.5 1253.5 427.5C1264.6 430.6 1281.3 435.9 1286.9 437.5"/>
<path d="M1380.3 476.2C1375.9 476.5 1363.6 476.7 1353.6 477.6C1343.6 478.5 1334.2 479.5 1320.3 481.7C1306.3 484 1286 487.6 1270.2 490.9C1254.4 494.2 1237.4 498.5 1225.2 501.4C1212.9 504.4 1203.2 506.9 1196.8 508.4C1190.4 510 1189.4 509.8 1186.8 510.9C1184.1 512.1 1182.2 513.3 1180.9 515.1C1179.7 516.9 1179.3 519 1179.3 521.8C1179.3 524.6 1179.7 527.6 1180.9 531.8C1182.2 536 1184.7 541.5 1186.8 546.8C1188.9 552.1 1191.6 559.3 1193.5 563.5C1195.3 567.7 1196.9 570.6 1197.6 572"/>
</g>
<g stroke-width="3.0">
<path d="M1070 435.9C1072.8 435.1 1081.1 432.7 1086.7 431.2C1092.2 429.7 1099.2 428.1 1103.4 427C1107.5 426 1108.1 425.7 1111.7 425C1115.3 424.3 1120.3 423.2 1125.1 422.7C1129.8 422.1 1135.9 421.6 1140.1 421.7C1144.2 421.8 1148 422.5 1150.1 423.4C1152.2 424.2 1152.2 426.1 1152.6 426.7"/>
<path d="M1080.8 433.4C1081.1 434.5 1081.5 438.3 1082.5 440C1083.5 441.8 1086 443.1 1086.7 443.7"/>
<path d="M1110 425.9C1108.9 426.6 1104.9 428.4 1103.4 430C1101.8 431.7 1101 434.2 1100.9 435.9C1100.7 437.5 1101.3 439.3 1102.5 440C1103.8 440.7 1107.4 440 1108.4 440"/>
<path d="M1110 425.9C1110.6 426.8 1111.7 430.2 1113.4 431.7C1115 433.2 1117.8 434.6 1120.1 435C1122.3 435.5 1124.5 434.8 1126.7 434.2C1128.9 433.6 1131.2 432.5 1133.4 431.7C1135.6 430.9 1139 429.6 1140.1 429.2"/>
</g>
<g stroke-width="1.6">
<path d="M1170.1 417.5C1171.5 417.9 1175.9 419.7 1178.4 420C1180.9 420.4 1184 419.7 1185.1 419.7"/>
</g>
<g stroke-width="1.3" fill="#fff">
<rect x="1086.3" y="438" width="9.2" height="5.7" rx="0.8" transform="rotate(-8 1090.9 440.9)"/>
<rect x="1108" y="435.5" width="9.2" height="5.7" rx="0.8" transform="rotate(-8 1112.5 438.4)"/>
<rect x="1118.4" y="425.7" width="10" height="6" rx="0.8" transform="rotate(-8 1123.4 428.7)"/>
<rect x="1132.6" y="433.4" width="10" height="6" rx="0.8" transform="rotate(-8 1137.6 436.4)"/>
<rect x="1143.7" y="427" width="8.7" height="5.3" rx="0.8" transform="rotate(-8 1148.1 429.7)"/>
<rect x="1184.9" y="417.9" width="8.7" height="4.3" rx="0.8" transform="rotate(8 1189.3 420)"/>
</g>
<g stroke-width="3.0">
<path d="M1070 468.4C1072.2 469.2 1077.8 472.2 1083.3 473.4C1088.9 474.6 1097.2 475.4 1103.4 475.4C1109.5 475.5 1114.5 474.5 1120.1 473.7C1125.6 473 1131.2 472.1 1136.7 471.1C1142.3 470.1 1148.4 468.7 1153.4 467.7C1158.4 466.7 1164.5 465.5 1166.8 465.1"/>
</g>
<g stroke-width="1.6">
<path d="M1104.2 471.4C1106.8 471.2 1115 470.5 1120.1 470.1C1125.1 469.6 1131.9 469 1134.2 468.7"/>
</g>
<g stroke-width="1.3" fill="#fff">
<ellipse cx="1172.1" cy="464.2" rx="5" ry="3.3" transform="rotate(10 1172.1 464.2)"/>
</g>
<g stroke-width="3.0">
<path d="M1145.9 474.2C1146.6 475.2 1149 477.7 1150.1 480.1C1151.2 482.4 1152 485.6 1152.6 488.4C1153.1 491.2 1153.6 494.4 1153.4 496.8C1153.3 499.1 1152 501.6 1151.7 502.6"/>
</g>
<g stroke-width="1.6">
<path d="M1132.6 485.9C1134.1 486.6 1138.8 489 1141.7 490.1C1144.7 491.2 1148.7 492.2 1150.1 492.6"/>
</g>
<g stroke-width="1.3" fill="#000">
<ellipse cx="1141.7" cy="490.1" rx="2.7" ry="3.3"/>
</g>
<g stroke-width="1.6">
<path d="M1100 500.1C1101.6 500.8 1106.2 502.6 1109.5 504.3C1112.9 505.9 1118.3 509.1 1120.1 510.1"/>
</g>
<g stroke-width="1.3" fill="#000">
<ellipse cx="1109.5" cy="504.3" rx="2.7" ry="3.3"/>
</g>
<g stroke-width="2.0">
<path d="M1090 483.4C1090.4 485.1 1091.4 490.1 1092.5 493.4C1093.6 496.8 1095.2 500.1 1096.7 503.4C1098.2 506.8 1100.6 510.7 1101.7 513.4C1102.8 516.2 1103.1 519 1103.4 520.1"/>
</g>
<g stroke-width="3.0">
<path d="M1070 498.4C1071.1 499 1075 500.1 1076.7 501.8C1078.3 503.4 1078.9 506.2 1080 508.4C1081.1 510.7 1081.4 513.6 1083.3 515.1C1085.3 516.6 1088.4 517.2 1091.7 517.6C1095 518 1099.2 518 1103.4 517.6C1107.5 517.2 1112.5 516.2 1116.7 515.1C1120.9 514 1124.5 512.2 1128.4 510.9C1132.3 509.7 1136.5 508.3 1140.1 507.6C1143.7 506.9 1147.6 506.5 1150.1 506.8C1152.6 507.1 1154.1 507.9 1155.1 509.3C1156.1 510.7 1156.2 513.3 1155.9 515.1C1155.6 516.9 1154.7 519.1 1153.4 520.1C1152.2 521.1 1149.2 520.8 1148.4 521"/>
</g>
<g stroke-width="1.3" fill="#fff">
<path d="M1083.3 538.5L1107.5 533.5L1111.7 536.8L1111.7 541.8L1087.5 548.5L1083.3 545.1Z"/>
</g>
<g stroke-width="1.15">
<path d="M1087.5 548.5L1087.5 541.8L1111.7 536.8"/>
<path d="M1087.5 541.8L1083.3 538.5"/>
</g>
<g stroke-width="1.6">
<path d="M1090.9 542.6L1090.9 546.8"/>
<path d="M1095 541.8L1095 546"/>
<path d="M1099.2 541L1099.2 544.8"/>
<path d="M1103.4 539.8L1103.4 543.8"/>
<path d="M1107.5 538.8L1107.5 542.8"/>
</g>
<g stroke-width="3.0">
<path d="M1091.7 535.1C1091.7 534.3 1090.9 531.8 1091.7 530.1C1092.5 528.5 1094.7 526.2 1096.7 525.1C1098.6 524 1101.8 523.2 1103.4 523.5C1104.9 523.7 1105.5 525.1 1105.9 526.8C1106.3 528.5 1105.9 532.4 1105.9 533.5"/>
<path d="M1123.4 513.4C1123.5 515.1 1124.5 520.4 1124.2 523.5C1123.9 526.5 1122.1 530.4 1121.7 531.8"/>
<path d="M1105.9 531.8C1106.8 531.4 1109.6 529.3 1111.7 529.3C1113.8 529.3 1117.3 531.4 1118.4 531.8"/>
</g>
<g stroke-width="1.3" fill="#000">
<path d="M1120.1 533.5C1122.1 531 1125.1 530.4 1128.4 530.1C1131.7 529.9 1137.3 530.4 1140.1 531.8C1142.9 533.2 1144.5 535.4 1145.1 538.5C1145.6 541.5 1142.9 546.8 1143.4 550.2C1144 553.5 1148.1 555.4 1148.4 558.5C1148.7 561.6 1147.6 566.6 1145.1 568.5C1142.6 570.4 1137 570.4 1133.4 570.2C1129.8 569.9 1126 569.1 1123.4 566.8C1120.7 564.6 1118.8 560.4 1117.5 556.8C1116.3 553.2 1115.5 549 1115.9 545.1C1116.3 541.3 1118 536 1120.1 533.5Z"/>
</g>
<g stroke-width="1.3" fill="#fff">
<path d="M1135.1 556.8L1145.1 554.3L1147.6 558.5L1147.1 565.2L1138.4 567.7L1135.1 564.3Z"/>
<path d="M1120.1 536.8L1125.1 535.5L1125.9 540.1L1120.9 541.8Z"/>
<path d="M1128.4 538.5L1135.1 536L1136.7 541.8L1130.1 544.3Z"/>
</g>
<g stroke-width="0.9" fill="#fff">
<path d="M1121.7 546.8L1127.6 545.1L1128.4 551.8L1122.6 553.5Z"/>
<path d="M1126.7 558.5L1132.6 556.8L1133.4 563.5L1127.6 565.2Z"/>
</g>
<g stroke-width="1.5">
<path d="M1117.5 545.1C1117.1 546.8 1115 551.8 1115 555.2C1115 558.5 1115.9 562.4 1117.5 565.2C1119.2 568 1123.8 570.9 1125.1 572"/>
</g>
<g stroke-width="3.4">
<path d="M1157.6 531C1158.3 530.4 1160 528.2 1161.8 527.6C1163.6 527.1 1166.5 527.1 1168.4 527.6C1170.4 528.2 1172.6 530.4 1173.4 531"/>
</g>
<g stroke-width="1.3" fill="#fff">
<ellipse cx="1156.4" cy="531.5" rx="3" ry="4" transform="rotate(-20 1156.4 531.5)"/>
<ellipse cx="1174.8" cy="533" rx="3" ry="4" transform="rotate(20 1174.8 533)"/>
</g>
<g stroke-width="3.0">
<path d="M1199.3 510.9C1199.3 513.3 1199.4 520 1199.3 525.1C1199.2 530.3 1198.7 536.2 1198.5 541.8C1198.2 547.4 1197.9 553.5 1197.6 558.5C1197.3 563.5 1196.9 569.8 1196.8 572"/>
<path d="M1199.3 514.3C1200 513.6 1201.7 511.3 1203.5 510.4C1205.3 509.6 1208.2 509.2 1210.1 509.3C1212.1 509.4 1213.9 510 1215.1 510.9C1216.4 511.9 1217.2 514.4 1217.6 515.1"/>
</g>
<g stroke-width="1.3" fill="#fff">
<rect x="1214" y="515.8" width="7.3" height="8" rx="0.8" transform="rotate(-5 1217.6 519.8)"/>
<ellipse cx="1192.6" cy="500.4" rx="3.7" ry="5" transform="rotate(-15 1192.6 500.4)"/>
</g>
<g stroke-width="1.6">
<path d="M1195.1 503.4L1198.1 506.8"/>
</g>
<g stroke-width="1.15">
<path d="M1287 437.5C1289.2 438 1293.7 438.4 1300 440.3C1306.3 442.3 1316.7 445.9 1325 449.2C1333.4 452.5 1342.5 456.6 1350.1 460C1357.6 463.5 1364.5 467 1370.1 470C1375.6 473.1 1378.4 474.9 1383.4 478.4C1388.4 481.9 1394.5 486.3 1400.1 490.9C1405.7 495.5 1411.2 500.5 1416.8 505.9C1422.3 511.3 1427.9 517.4 1433.5 523.4C1439 529.4 1444.6 535.7 1450.2 541.8C1455.7 547.9 1462.1 555.5 1466.8 560.1C1471.6 564.7 1476.6 567.8 1478.5 569.3"/>
</g>
<g stroke-width="3.0">
<path d="M1400.1 504.2C1401.2 505.3 1404 507.5 1406.8 510.4C1409.6 513.3 1413.7 517.9 1416.8 521.8C1419.8 525.6 1422.6 529.3 1425.1 533.4C1427.6 537.6 1429.9 542.6 1431.8 546.8C1433.7 551 1435.3 554.7 1436.8 558.5C1438.3 562.2 1440.3 567.5 1441 569.3"/>
</g>
<g stroke-width="1.3" fill="#fff">
<rect x="1394.8" y="496.2" width="7.3" height="9.3" rx="0.8" transform="rotate(-35 1398.4 500.9)"/>
<rect x="1432.6" y="535.9" width="6.7" height="7.3" rx="0.8" transform="rotate(-30 1436 539.6)"/>
</g>
<g stroke-width="1.6">
<path d="M1433.5 543.4L1431.8 547.6"/>
</g>
<g stroke-width="1.15">
<path d="M938 511.5C945 514.7 964.3 523.1 980 530.5C995.7 537.9 1007 544.1 1032 556C1057 567.9 1106.7 591.2 1130 602C1153.3 612.8 1165 617.8 1172 621"/>
<path d="M936.5 515C943.8 518.5 964.4 528.4 980 536C995.6 543.6 1005.8 548.7 1030 560.5C1054.2 572.3 1102 595.9 1125 607C1148 618.1 1160.8 623.7 1168 627"/>
<path d="M946 546.3L1078.4 601.5"/>
<path d="M835.8 560C836.3 562.2 837.1 569.2 838.4 573.3C839.6 577.5 841.4 581.8 843.4 585C845.3 588.2 848.9 591.3 850 592.5"/>
<path d="M850.9 576.7C851 580.9 850.9 593.9 851.7 601.7C852.5 609.5 853.9 617 855.9 623.4C857.8 629.8 860.5 635.4 863.4 640.1C866.3 644.8 869.8 649 873.4 651.8C877 654.5 881.7 656.2 885.1 656.8C888.4 657.4 888.7 656.4 893.4 655.4C898.1 654.5 908.7 652.6 913.4 650.9C918.2 649.2 920 646.9 921.8 645.1C923.6 643.3 923.9 640.9 924.3 640.1"/>
<path d="M865 641.7C866.7 643.1 871.4 648.4 875.1 650.1C878.7 651.8 883.1 652.9 886.7 651.8C890.3 650.6 894.2 647 896.7 643.4C899.2 639.8 900.7 634.8 901.7 630.1C902.8 625.3 902.7 617.6 902.9 615.1"/>
<path d="M858.4 585C857.4 589.9 857.1 596.1 857.5 601.7C858 607.3 859.1 613.4 860.9 618.4C862.7 623.4 865.5 629 868.4 631.7C871.3 634.5 875.5 635.9 878.4 635.1C881.3 634.2 884.1 630.9 885.9 626.7C887.7 622.6 889.1 616.2 889.2 610.1C889.4 603.9 888.3 595.9 886.7 590C885.2 584.2 882.6 578.5 880.1 575C877.6 571.5 874.5 569.6 871.7 569.2C868.9 568.8 865.6 569.9 863.4 572.5C861.2 575.2 859.3 580.2 858.4 585Z"/>
<path d="M899.2 598.4C899.9 601.7 901.9 613.1 903.4 618.4C904.9 623.7 906.5 626.7 908.4 630.1C910.4 633.4 912.9 636.5 915.1 638.4C917.3 640.4 920.7 641.2 921.8 641.7"/>
<path d="M926.8 643.4L986.8 676.8L1086.9 731"/>
<path d="M936.8 650.9L986.8 679.3L1080.3 732"/>
<path d="M1015.2 560C1013.8 562.8 1008.9 569.7 1006.9 576.7C1004.8 583.6 1003.4 593.4 1002.7 601.7C1002 610.1 1002.3 618.1 1002.7 626.7C1003.1 635.4 1004.8 649 1005.2 653.4"/>
</g>
<g stroke-width="3.4">
<path d="M920.1 610.1C920.7 612.8 922 622.6 923.4 626.7C924.8 630.9 925.7 632.6 928.4 635.1C931.2 637.6 934.6 638.7 940.1 641.7C945.7 644.8 954 649.3 961.8 653.4C969.6 657.6 979.9 662.9 986.8 666.8C993.8 670.7 996.6 672.9 1003.5 676.8C1010.5 680.7 1020.2 685.7 1028.5 690.1C1036.9 694.6 1046.6 699.6 1053.6 703.5C1060.5 707.4 1065.8 711.3 1070.3 713.5C1074.7 715.7 1077.9 716.8 1080.3 716.8C1082.6 716.8 1083.7 714 1084.4 713.5"/>
<path d="M956 655.4L987.7 672.1"/>
</g>
<g stroke-width="3.0">
<path d="M941.8 608.4C942.1 610.9 942.9 619.2 943.5 623.4C944 627.6 943.7 630.9 945.1 633.4C946.5 635.9 947.6 636.2 951.8 638.4C956 640.6 964.3 643.7 970.2 646.8C976 649.8 982.9 655 986.8 656.8C990.7 658.6 992 658.7 993.5 657.6C995 656.5 995.6 651.3 996 650.1"/>
<path d="M950.1 560C950.3 565.6 950.5 583.6 951 593.4C951.4 603.1 952.5 611.4 952.6 618.4C952.8 625.3 951.9 632.3 951.8 635.1"/>
<path d="M956.8 646.8L970.2 638.4L996.8 632.6"/>
</g>
<g stroke-width="1.3" fill="#fff">
<rect x="992.7" y="642.1" width="6.7" height="7.7" rx="0.8" transform="rotate(-5 996 645.9)"/>
</g>
<g stroke-width="3.0">
<path d="M1016.9 628.4C1020.2 627.7 1029.4 626 1036.9 624.2C1044.4 622.4 1054.7 619.4 1061.9 617.6C1069.1 615.8 1075.8 614.6 1080.3 613.4C1084.7 612.1 1086.9 611 1088.6 610.1C1090.3 609.1 1090 608 1090.3 607.5"/>
</g>
<g stroke-width="3.6" stroke-dasharray="2.4 1.3" stroke-linecap="butt">
<path d="M1080.3 601.7L1090.3 608.4"/>
</g>
<g stroke-width="3.0">
<path d="M1005.2 675.1C1005.7 672.6 1007.4 666.2 1008.5 660.1C1009.6 654 1010.7 643.6 1011.9 638.4C1013 633.3 1014.6 630.8 1015.2 629.2"/>
</g>
<g stroke-width="1.3" fill="#fff">
<ellipse cx="1008.5" cy="629.2" rx="5" ry="3" transform="rotate(10 1008.5 629.2)"/>
</g>
<g stroke-width="3.0">
<path d="M1018.5 640.1C1019.1 639.2 1019.6 636.3 1021.9 635.1C1024.1 633.8 1029.4 632.7 1031.9 632.6C1034.4 632.4 1036.3 633.3 1036.9 634.2C1037.4 635.2 1035.5 637.7 1035.2 638.4"/>
</g>
<g stroke-width="1.3" fill="#fff">
<ellipse cx="1024.4" cy="640.4" rx="5" ry="3.7" transform="rotate(-30 1024.4 640.4)"/>
</g>
<g stroke-width="3.0">
<path d="M1033.5 626.7C1034.9 627.3 1039.9 628.4 1041.9 630.1C1043.8 631.7 1044.9 634.8 1045.2 636.7C1045.5 638.7 1043.8 640.9 1043.6 641.7"/>
</g>
<g stroke-width="1.3" fill="#fff">
<ellipse cx="1042.7" cy="643.8" rx="5" ry="2.7" transform="rotate(10 1042.7 643.8)"/>
</g>
<g stroke-width="3.6" stroke-dasharray="2.4 1.3" stroke-linecap="butt">
<path d="M1041.9 630.1C1043.8 630.5 1049.1 632.5 1053.6 632.7C1058 633 1066.1 631.9 1068.6 631.7"/>
</g>
<g stroke-width="1.3" fill="#fff">
<ellipse cx="1054.4" cy="625.4" rx="4.3" ry="2.7" transform="rotate(10 1054.4 625.4)"/>
<ellipse cx="1078.6" cy="624.7" rx="4.7" ry="3" transform="rotate(10 1078.6 624.7)"/>
<ellipse cx="1090.3" cy="632.9" rx="4.7" ry="3" transform="rotate(10 1090.3 632.9)"/>
</g>
<g stroke-width="2.0">
<path d="M1068.6 631.7C1069.4 631 1072.1 628.4 1073.6 627.6C1075.1 626.7 1077.1 626.9 1077.8 626.7"/>
<path d="M1070.3 630.9C1071.9 631 1077.5 631.4 1080.3 631.7C1083 632.1 1085.8 632.7 1086.9 632.9"/>
</g>
<g stroke-width="3.0">
<path d="M1031 648.4C1031 650.9 1030.6 658.7 1031 663.4C1031.5 668.2 1031.7 673.2 1033.5 676.8C1035.4 680.4 1038 682.6 1041.9 685.1C1045.8 687.6 1054.4 690.7 1056.9 691.8"/>
</g>
<g stroke-width="1.3" fill="#fff">
<rect x="1035" y="657.9" width="7" height="7.7" rx="0.8" transform="rotate(-10 1038.6 661.8)"/>
<rect x="1050.9" y="656.3" width="7" height="7.7" rx="0.8" transform="rotate(-10 1054.4 660.1)"/>
<rect x="1066.2" y="659.6" width="7" height="7.7" rx="0.8" transform="rotate(-10 1069.7 663.4)"/>
<rect x="1014.2" y="667.9" width="7" height="7.7" rx="0.8" transform="rotate(-10 1017.7 671.8)"/>
<ellipse cx="1012.7" cy="656.8" rx="4" ry="2.7" transform="rotate(15 1012.7 656.8)"/>
</g>
<g stroke-width="3.0">
<path d="M1043.6 665.1C1044.4 666.2 1046.3 670.1 1048.6 671.8C1050.8 673.4 1054.1 674.8 1056.9 675.1C1059.7 675.4 1063.2 674.6 1065.2 673.4C1067.3 672.3 1068.7 669.3 1069.4 668.4"/>
<path d="M1054.4 665.1C1054.5 666.8 1054.5 672.1 1055.2 675.1C1055.9 678.2 1056.6 681 1058.6 683.5C1060.5 686 1065 687.6 1066.9 690.1C1068.9 692.6 1069.7 697.1 1070.3 698.5"/>
<path d="M1070.3 700.1C1071.9 700.3 1077.5 701.8 1080.3 701C1083 700.1 1085.3 697.5 1086.9 695.1C1088.6 692.8 1089.2 689.3 1090.3 686.8C1091.4 684.3 1093.1 681.2 1093.6 680.1"/>
</g>
<g stroke-width="1.3" fill="#fff">
<rect x="1091.9" y="675.1" width="6.7" height="8.3" rx="0.8" transform="rotate(25 1095.3 679.3)"/>
</g>
<g stroke-width="3.0">
<path d="M1085.3 670.1L1100.3 665.9L1110.3 663.4"/>
<path d="M1026.9 689.3L1038.6 686"/>
<path d="M1045.2 684.3L1055.2 681"/>
<path d="M1060.2 679.3L1073.6 675.1"/>
<path d="M1008.5 679.3C1009.6 678.9 1013.7 677.5 1015.2 676.8C1016.7 676.1 1017.3 675.4 1017.7 675.1"/>
</g>
<g stroke-width="1.15">
<path d="M1095.1 610.1C1103.7 613.6 1129.9 624.1 1146.8 630.9C1163.8 637.8 1180.2 645 1196.9 651C1213.6 656.9 1232.8 662.5 1246.9 666.8C1261.1 671.1 1276.1 675.2 1282 676.8"/>
<path d="M1180.2 622.1C1185.8 624.5 1202.4 632.1 1213.6 636.8C1224.7 641.5 1234.7 646.2 1246.9 650.1C1259.2 654.1 1280.3 658.7 1287 660.5"/>
<path d="M1088.4 613.4L1103.5 619.3L1106.5 622.6L1106 630.9L1103.5 633.4L1090.9 628.4L1088.1 625.1Z"/>
<path d="M1089.3 620.1L1106 626.8"/>
<path d="M1123.8 570.1L1123.1 598.4"/>
<path d="M1129.3 573.4L1127.6 600.1"/>
<path d="M1121.8 613.4C1121.3 617.3 1119.9 628.7 1118.5 636.8C1117.1 644.8 1114.9 656.8 1113.5 661.8C1112.1 666.8 1110.7 666 1110.1 666.8"/>
<path d="M1179.4 520C1180.1 522.8 1181.7 530.6 1183.5 536.7C1185.3 542.8 1187.7 550 1190.2 556.7C1192.7 563.4 1195.8 570.6 1198.6 576.7C1201.3 582.8 1203.8 588.4 1206.9 593.4C1210 598.4 1213 602.9 1216.9 606.8C1220.8 610.6 1225.2 614.5 1230.3 616.8C1235.3 619 1240 620 1246.9 620.1C1253.9 620.2 1263.5 618.6 1272 617.6C1280.4 616.6 1293.5 614.8 1297.8 614.3"/>
<path d="M1240.3 620.1C1241.9 622.3 1246.4 629.6 1250.3 633.4C1254.2 637.3 1258.6 640.4 1263.6 643.5C1268.6 646.5 1274.6 649.3 1280.3 651.8C1286 654.3 1294.9 657.4 1297.8 658.5"/>
</g>
<g stroke-width="3.4">
<path d="M1165.2 572.1C1170.5 574.5 1186 581.7 1196.9 586.7C1207.7 591.7 1219.1 596.9 1230.3 602.1C1241.4 607.2 1252.4 612.3 1263.6 617.6C1274.9 622.9 1292.1 631.1 1297.8 633.8"/>
</g>
<g stroke-width="3.0">
<path d="M1213.6 598.4C1214.7 599 1218 601.1 1220.2 601.7C1222.5 602.4 1225.2 602.9 1226.9 602.6C1228.6 602.3 1229.7 600.5 1230.3 600.1"/>
<path d="M1126.8 568.4C1128.5 569 1133.5 571.6 1136.8 572.1C1140.2 572.6 1143.8 571.9 1146.8 571.4C1149.9 570.9 1153.8 569.6 1155.2 569.2"/>
<path d="M1178.5 536.7C1178.8 539.5 1179.1 548.6 1180.2 553.4C1181.3 558.1 1182.4 561.7 1185.2 565C1188 568.4 1192.2 570.9 1196.9 573.4C1201.6 575.9 1208.6 578.3 1213.6 580.1C1218.6 581.8 1222.7 583 1226.9 583.7C1231.1 584.5 1235.5 585.3 1238.6 584.4C1241.7 583.5 1243.9 581.1 1245.3 578.4C1246.7 575.7 1246.7 570.1 1246.9 568.4"/>
</g>
<g stroke-width="1.3" fill="#fff">
<ellipse cx="1161.8" cy="547.5" rx="3" ry="5.7" transform="rotate(-25 1161.8 547.5)"/>
</g>
<g stroke-width="3.0">
<path d="M1164.4 552.5C1165.6 554.1 1169.2 558 1171.9 561.7C1174.5 565.5 1177.4 570.1 1180.2 575.1C1183 580.1 1186 585.6 1188.5 591.7C1191 597.9 1194 606.2 1195.2 611.8C1196.5 617.3 1195.9 622.9 1196 625.1"/>
</g>
<g stroke-width="3.6" stroke-dasharray="2.4 1.3" stroke-linecap="butt">
<path d="M1196 625.1C1195.5 626.5 1194.1 630.7 1192.7 633.4C1191.3 636.2 1189.8 638.6 1187.7 641.8C1185.6 645 1183.7 650.4 1180.2 652.6C1176.7 654.9 1171.6 655.4 1166.9 655.5C1162.1 655.5 1155.7 653 1151.8 653C1147.9 653 1147.1 654 1143.5 655.5C1139.9 656.9 1132.4 660.8 1130.2 661.8"/>
</g>
<g stroke-width="1.3" fill="#fff">
<ellipse cx="1220.2" cy="546.7" rx="4.7" ry="3" transform="rotate(15 1220.2 546.7)"/>
<rect x="1235.3" y="546.7" width="7.3" height="7.3" rx="0.8" transform="rotate(-5 1238.9 550.4)"/>
<rect x="1243.1" y="559.9" width="7" height="7.7" rx="0.8" transform="rotate(-5 1246.6 563.7)"/>
<rect x="1232.1" y="567" width="7" height="7.7" rx="0.8" transform="rotate(-5 1235.6 570.9)"/>
</g>
<g stroke-width="3.0">
<path d="M1224.4 548.4C1224.8 549.5 1226.8 552.5 1226.9 555C1227.1 557.5 1225.4 558.9 1225.2 563.4C1225.1 567.8 1225.9 578.7 1226.1 581.7"/>
<path d="M1226.9 559.2C1228 558.9 1231.6 558.3 1233.6 557.5C1235.5 556.8 1237.8 555.2 1238.6 554.7"/>
<path d="M1228.6 564.2L1231.9 568.4"/>
<path d="M1135.2 598.4C1138.5 597.4 1147.7 593.7 1155.2 592.1C1162.7 590.4 1173.2 588.7 1180.2 588.4C1187.2 588.1 1191.3 588.4 1196.9 590.1C1202.4 591.7 1210.8 597 1213.6 598.4"/>
<path d="M1158.5 595.1C1159.1 595.9 1160.2 598.7 1161.8 600.1C1163.5 601.5 1167.4 602.9 1168.5 603.4"/>
</g>
<g stroke-width="1.3" fill="#fff">
<rect x="1178.9" y="599.9" width="7.7" height="7.7" rx="0.8" transform="rotate(20 1182.7 603.8)"/>
</g>
<g stroke-width="3.0">
<path d="M1188.5 606.8C1188 607.3 1186.6 609.7 1185.2 610.1C1183.8 610.5 1181 609.4 1180.2 609.3"/>
</g>
<g stroke-width="1.5">
<path d="M1126.8 601.7L1145.2 606.8"/>
<path d="M1125.1 604.3L1143.5 609.3"/>
</g>
<g stroke-width="2.0">
<path d="M1095.1 596.7C1096.5 597.3 1100.7 599 1103.5 600.1C1106.2 601.2 1108.7 603 1111.8 603.4C1114.9 603.8 1120.1 602.7 1121.8 602.6"/>
</g>
<g stroke-width="1.3" fill="#fff">
<ellipse cx="1121.8" cy="610.9" rx="4.7" ry="3" transform="rotate(15 1121.8 610.9)"/>
<ellipse cx="1131" cy="613.1" rx="5" ry="3" transform="rotate(15 1131 613.1)"/>
<ellipse cx="1139.3" cy="618.4" rx="5" ry="3" transform="rotate(15 1139.3 618.4)"/>
<ellipse cx="1147.7" cy="624.3" rx="5" ry="3" transform="rotate(15 1147.7 624.3)"/>
<ellipse cx="1151.8" cy="609.3" rx="5" ry="3" transform="rotate(15 1151.8 609.3)"/>
<ellipse cx="1163.5" cy="614.3" rx="5" ry="3" transform="rotate(15 1163.5 614.3)"/>
</g>
<g stroke-width="2.0">
<path d="M1156.8 598.4C1158 599 1161.6 600.4 1163.5 601.7C1165.5 603.1 1168 605.1 1168.5 606.8C1169.1 608.4 1167.1 610.9 1166.9 611.8"/>
</g>
<g stroke-width="1.5">
<path d="M1075.1 668.5L1086.8 675.2"/>
<path d="M1078.4 671.8L1088.4 678.5"/>
</g>
<g stroke-width="1.3" fill="#fff">
<rect x="1102.1" y="666.8" width="6.7" height="6.7" rx="0.8" transform="rotate(25 1105.5 670.2)"/>
<rect x="1123.5" y="671" width="6.7" height="8.3" rx="0.8" transform="rotate(25 1126.8 675.2)"/>
<path d="M1131 651.8L1136.8 641.8L1140.2 644.3L1136 655.1Z"/>
</g>
<g stroke-width="3.0">
<path d="M1111.8 666.8C1112.6 665.4 1115.1 660 1116.8 658.5C1118.5 656.9 1121 657.8 1121.8 657.6"/>
</g>
<g stroke-width="3.4">
<path d="M1123.5 663.5L1135.2 658.5"/>
</g>
<g stroke-width="3.6" stroke-dasharray="2.4 1.3" stroke-linecap="butt">
<path d="M1110.1 686.8C1111.2 685.4 1114.3 681.3 1116.8 678.5C1119.3 675.7 1122.9 672.7 1125.1 670.2C1127.4 667.6 1129.3 664.6 1130.2 663.5"/>
<path d="M1130.2 685.2C1131 683.8 1134.2 679.3 1135.2 676.8C1136.1 674.3 1135.9 671.3 1136 670.2"/>
</g>
<g stroke-width="3.0">
<path d="M1086.8 692C1087.6 690.9 1090.1 686.9 1091.8 685.2C1093.4 683.5 1095.9 682.4 1096.8 681.8"/>
</g>
<g stroke-width="1.3" fill="#fff">
<ellipse cx="1156" cy="677.7" rx="6.7" ry="3.7"/>
<ellipse cx="1156" cy="676" rx="3.3" ry="1.7"/>
</g>
<g stroke-width="3.0">
<path d="M1146.8 666.8C1147.7 667.4 1150.4 668.9 1151.8 670.2C1153.2 671.4 1154.6 673.6 1155.2 674.3"/>
</g>
<g stroke-width="1.15">
<path d="M1136.8 680.2L1148.5 686.8"/>
<path d="M1478.5 570.9C1482.7 572.7 1494.9 577.7 1503.6 581.7C1512.2 585.7 1521.9 591 1530.3 595.1C1538.6 599.1 1549 603.7 1553.6 605.9C1558.2 608.1 1557.1 608 1557.8 608.4"/>
<path d="M1557.8 608.4C1557.9 612.3 1558.2 623.7 1558.6 631.8C1559 639.8 1559.9 649.8 1560.3 656.8C1560.7 663.7 1560.6 667.9 1561.1 673.5C1561.7 679 1562.1 685.1 1563.6 690.2C1565.2 695.2 1568.8 699.9 1570.3 703.5C1571.8 707.1 1572.4 710.6 1572.8 712"/>
<path d="M1478.5 571.2L1448.5 581.7"/>
<path d="M1475.2 575.9L1455.2 582.5"/>
<path d="M1540.3 608.4L1557.8 605.9"/>
<path d="M1270 618.1L1325.1 610.1"/>
<path d="M1346.7 606.4L1376.8 600.9"/>
<path d="M1326.7 666.8C1336.7 663.5 1368.4 652.6 1386.8 646.8C1405.1 640.9 1420.2 636.5 1436.8 631.8C1453.5 627 1473.3 621.7 1486.9 618.4C1500.5 615.1 1513.3 612.9 1518.6 611.7"/>
<path d="M1270 645.1L1316.7 668.5"/>
<path d="M1270 656.8L1286.7 660.5"/>
<path d="M1271.7 676.8L1281.7 677.6"/>
<path d="M1397.6 681C1398 680.4 1397.5 678.7 1400.1 677.6C1402.8 676.5 1411.3 674.9 1413.5 674.3"/>
<path d="M1434.3 668.5C1436.4 667.8 1444.2 666 1446.8 664.3C1449.5 662.6 1448.8 660.1 1450.2 658.5C1451.6 656.8 1453.2 655 1455.2 654.3C1457.1 653.6 1459.9 653.6 1461.9 654.3C1463.8 655 1465.5 657.5 1466.9 658.5C1468.3 659.4 1467.4 660.4 1470.2 660.1C1473 659.8 1481.3 657.3 1483.5 656.8"/>
<path d="M1503.6 650.9C1504.7 651.1 1508.7 650.8 1510.2 651.8C1511.8 652.8 1512.9 653.4 1512.7 656.8C1512.6 660.1 1510 669.3 1509.4 671.8"/>
<path d="M1398.5 685.1L1436.8 675.1L1470.2 666.8L1500.2 660.1L1511.9 657.6"/>
<path d="M1498.6 662.6L1495.2 673.5"/>
<path d="M1557.8 630.1L1527.8 712"/>
<path d="M1553.6 640.1L1523.6 712"/>
<path d="M1514.4 695.2C1514.6 693.8 1514 689.6 1515.2 686.8C1516.5 684 1519.4 680.7 1521.9 678.5C1524.4 676.2 1527.8 674.3 1530.3 673.5C1532.8 672.6 1535.8 673.5 1536.9 673.5"/>
<path d="M1514.4 695.2C1515.4 695.6 1517.9 697.5 1520.3 697.7C1522.6 697.8 1527.2 696.3 1528.6 696"/>
<path d="M1530.3 700.5L1545.3 695.2L1560.3 686.8"/>
<path d="M1545.3 686.8L1560.3 680.5"/>
<path d="M1321.7 673.5C1322.3 674.9 1323.7 679 1325.1 681.8C1326.4 684.6 1328.1 687.1 1330.1 690.2C1332 693.2 1334.8 696.5 1336.7 700.2C1338.7 703.8 1340.9 710 1341.7 712"/>
</g>
<g stroke-width="3.4">
<path d="M1270 620.1C1272.8 621.5 1280.3 625.6 1286.7 628.4C1293.1 631.3 1304.8 635.7 1308.4 637.1"/>
</g>
<g stroke-width="3.0">
<path d="M1287.5 590.1C1287.7 592.8 1287.7 602.6 1288.4 606.7C1289 610.9 1289.2 612.3 1291.7 615.1C1294.2 617.9 1298.6 620.6 1303.4 623.4C1308.1 626.2 1315.3 629.5 1320.1 631.8C1324.8 634 1327.8 636.1 1331.7 637.1C1335.6 638.1 1340.3 638.2 1343.4 637.6C1346.5 637 1347.6 635.8 1350.1 633.4C1352.6 631.1 1356.1 626.1 1358.4 623.4C1360.8 620.8 1363.3 618.6 1364.3 617.6"/>
</g>
<g stroke-width="3.6" stroke-dasharray="2.4 1.3" stroke-linecap="butt">
<path d="M1310 638.4C1312.5 639.9 1320.6 645.1 1325.1 647.1C1329.5 649.1 1332.8 650.2 1336.7 650.4C1340.6 650.7 1344.8 650.2 1348.4 648.8C1352 647.4 1354.8 645.2 1358.4 642.1C1362 639 1366.5 634.3 1370.1 630.1C1373.7 625.9 1376.8 621.2 1380.1 617.1C1383.4 613 1386.5 608.5 1390.1 605.4C1393.7 602.3 1399.9 599.8 1401.8 598.7"/>
</g>
<g stroke-width="3.0">
<path d="M1311.7 641.8C1313.9 643.2 1320.9 648.2 1325.1 650.1C1329.2 652 1332.6 653 1336.7 653.1C1340.9 653.3 1346 652.6 1350.1 650.9C1354.1 649.3 1359.1 644.7 1360.9 643.4"/>
</g>
<g stroke-width="3.4">
<path d="M1270 578.7C1270.8 578.2 1273.1 576.2 1275 575.9C1277 575.5 1279.7 575.9 1281.7 576.7C1283.6 577.5 1285.8 580.2 1286.7 580.9"/>
</g>
<g stroke-width="1.3" fill="#fff">
<ellipse cx="1287" cy="580.9" rx="3" ry="3.7" transform="rotate(20 1287 580.9)"/>
<ellipse cx="1271.3" cy="580" rx="2.7" ry="3.3" transform="rotate(-20 1271.3 580)"/>
</g>
<g stroke-width="3.6" stroke-dasharray="2.4 1.3" stroke-linecap="butt">
<path d="M1276.7 598.4C1276.7 599.8 1277.1 604.2 1276.7 606.7C1276.3 609.2 1275.3 611.7 1274.2 613.4C1273.1 615.1 1270.7 616.5 1270 617.1"/>
</g>
<g stroke-width="1.3" fill="#fff">
<rect x="1275.3" y="590.4" width="7.7" height="6" rx="0.8" transform="rotate(-10 1279.2 593.4)"/>
<rect x="1303.5" y="599.9" width="7" height="7.7" rx="0.8" transform="rotate(-10 1307 603.7)"/>
<rect x="1320.7" y="599.2" width="7" height="7.7" rx="0.8" transform="rotate(-10 1324.2 603.1)"/>
<rect x="1334.4" y="603.4" width="7.3" height="7.3" rx="0.8" transform="rotate(-5 1338.1 607.1)"/>
</g>
<g stroke-width="3.0">
<path d="M1311.7 605.9C1312.8 607.2 1316.4 611 1318.4 613.4C1320.3 615.8 1322.6 619 1323.4 620.1"/>
<path d="M1324.2 608.4C1324.1 610.3 1323 617.3 1323.4 620.1C1323.8 622.9 1325.3 623.7 1326.7 625.1C1328.1 626.5 1330.6 626.8 1331.7 628.4C1332.8 630.1 1333.1 634 1333.4 635.1"/>
<path d="M1336.7 611.7C1335.9 612.7 1333.4 616.2 1331.7 617.6C1330.1 619 1327.6 619.7 1326.7 620.1"/>
<path d="M1336.7 571.7C1338.1 572.3 1341.7 573.4 1345.1 575C1348.4 576.7 1352.6 579.2 1356.8 581.7C1360.9 584.2 1366.8 587.5 1370.1 590.1C1373.4 592.6 1375.7 595.6 1376.8 596.7"/>
<path d="M1336.7 571.7C1336.6 572.8 1335.6 576.1 1335.9 578.4C1336.2 580.6 1337.2 583.4 1338.4 585C1339.7 586.7 1342.6 587.8 1343.4 588.4"/>
<path d="M1338.4 580C1339.8 580.7 1344 583.1 1346.7 583.7C1349.5 584.3 1353.7 583.7 1355.1 583.7"/>
</g>
<g stroke-width="1.3" fill="#fff">
<ellipse cx="1344.2" cy="589.5" rx="5" ry="3" transform="rotate(15 1344.2 589.5)"/>
<ellipse cx="1363.4" cy="593.4" rx="5.3" ry="3" transform="rotate(10 1363.4 593.4)"/>
<rect x="1381.8" y="595.1" width="8.3" height="6" rx="0.8" transform="rotate(10 1385.9 598.1)"/>
<rect x="1372.6" y="603.9" width="6.7" height="7.3" rx="0.8" transform="rotate(-10 1375.9 607.6)"/>
<rect x="1362.9" y="612.6" width="7" height="8.3" rx="0.8" transform="rotate(20 1366.4 616.7)"/>
<rect x="1392.1" y="609.9" width="7.7" height="7.7" rx="0.8" transform="rotate(25 1396 613.7)"/>
<rect x="1372.3" y="630.4" width="6.7" height="6.7" rx="0.8" transform="rotate(10 1375.6 633.8)"/>
</g>
<g stroke-width="3.0">
<path d="M1376.8 620.1C1377.9 620.5 1380.9 622.6 1383.4 622.6C1385.9 622.6 1389.8 620.9 1391.8 620.1C1393.7 619.2 1394.6 618 1395.1 617.6"/>
<path d="M1376.8 623.4C1377.1 624.3 1378.4 627.2 1378.4 628.4C1378.4 629.7 1377.1 630.5 1376.8 630.9"/>
<path d="M1366.8 583.7C1370.1 583.2 1380.7 581.9 1386.8 580.9C1392.9 579.8 1397.9 578.6 1403.5 577.5C1409 576.4 1417.4 574.8 1420.2 574.2"/>
</g>
<g stroke-width="3.6" stroke-dasharray="2.4 1.3" stroke-linecap="butt">
<path d="M1420.2 574.2C1422.9 573.6 1431.3 571.3 1436.8 570.9C1442.4 570.4 1448.5 570.7 1453.5 571.7C1458.5 572.7 1463.2 574.5 1466.9 576.7C1470.5 578.9 1473 582 1475.2 585C1477.4 588.1 1478.5 592.3 1480.2 595.1C1481.9 597.8 1483.3 600.5 1485.2 601.7C1487.2 603 1489.4 603.3 1491.9 602.6C1494.4 601.8 1497.7 598.3 1500.2 597.1C1502.7 595.8 1505.8 595.4 1506.9 595.1"/>
<path d="M1406.8 591.7C1408.5 591.2 1413.2 589.4 1416.8 588.4C1420.4 587.4 1425.2 587 1428.5 585.9C1431.8 584.8 1434.9 583.1 1436.8 581.7C1438.8 580.3 1439.6 578.2 1440.2 577.5"/>
<path d="M1468.5 586.7C1469.4 588.1 1471.9 592.8 1473.5 595.1C1475.2 597.3 1477.7 599.5 1478.5 600.4"/>
</g>
<g stroke-width="1.3" fill="#fff">
<rect x="1396.5" y="583.5" width="6.7" height="13" rx="0.8" transform="rotate(22 1399.8 590.1)"/>
</g>
<g stroke-width="2.0">
<path d="M1396.8 586.7L1403.5 585.4"/>
<path d="M1396 589.7L1403.1 588.4"/>
<path d="M1395.5 592.7L1402.5 591.4"/>
<path d="M1395.1 595.7L1401.8 594.4"/>
</g>
<g stroke-width="1.3" fill="#fff">
<rect x="1401.3" y="597.9" width="9.3" height="8.3" rx="0.8" transform="rotate(-25 1406 602.1)"/>
</g>
<g stroke-width="3.0">
<path d="M1443.5 588.4C1443.1 590.1 1441 594.8 1441 598.4C1441 602 1442 606.7 1443.5 610.1C1445 613.4 1447.4 616.3 1450.2 618.4C1453 620.5 1456.9 622 1460.2 622.6C1463.5 623.1 1466.9 622.6 1470.2 621.7C1473.5 620.9 1476.6 618.7 1480.2 617.6C1483.8 616.5 1488 615.6 1491.9 615.1C1495.8 614.5 1501.6 614.4 1503.6 614.2"/>
</g>
<g stroke-width="3.4">
<path d="M1485.2 602.6C1486.9 601.8 1491.6 599 1495.2 597.9C1498.8 596.8 1502.7 595.5 1506.9 595.9C1511.1 596.3 1515.8 597.7 1520.3 600.1C1524.7 602.4 1529.7 606.5 1533.6 610.1C1537.5 613.7 1540.8 617.9 1543.6 621.7C1546.4 625.6 1549.2 629.3 1550.3 633.4C1551.4 637.6 1551.1 641.8 1550.3 646.8C1549.4 651.8 1546.9 658.5 1545.3 663.5C1543.6 668.5 1541.9 672.9 1540.3 676.8C1538.6 680.7 1536.1 685.1 1535.3 686.8"/>
<path d="M1510.2 615.1C1511.6 616.5 1516.4 619.8 1518.6 623.4C1520.8 627 1522.9 631.8 1523.6 636.8C1524.3 641.8 1523.9 648.2 1522.8 653.4C1521.6 658.7 1519 664.3 1516.9 668.5C1514.8 672.6 1511.9 675.4 1510.2 678.5C1508.6 681.5 1506.9 684.3 1506.9 686.8C1506.9 689.3 1508.6 692 1510.2 693.5C1511.9 695 1515.8 695.6 1516.9 696"/>
</g>
<g stroke-width="1.3" fill="#fff">
<rect x="1464.9" y="606.4" width="10.7" height="9" rx="0.8" transform="rotate(-30 1470.2 610.9)"/>
<rect x="1510.6" y="606.4" width="6.7" height="6.7" rx="0.8" transform="rotate(10 1513.9 609.7)"/>
<rect x="1526.3" y="611.7" width="7" height="7.3" rx="0.8" transform="rotate(10 1529.8 615.4)"/>
</g>
<g stroke-width="3.0">
<path d="M1476.9 610.1C1478.5 609.6 1483.5 608.4 1486.9 607.1C1490.2 605.7 1495.2 602.9 1496.9 602.1"/>
<path d="M1510.2 603.4C1511.4 604 1514.4 605.3 1516.9 606.7C1519.4 608.1 1523.9 610.9 1525.3 611.7"/>
<path d="M1417.6 678.5C1417.8 679.6 1417.2 683.2 1418.5 685.1C1419.7 687.1 1422.1 689 1425.2 690.2C1428.2 691.3 1432.1 691.8 1436.8 691.8C1441.6 691.8 1448 691 1453.5 690.2C1459.1 689.3 1464.6 688.2 1470.2 686.8C1475.8 685.4 1482.7 683.2 1486.9 681.8C1491.1 680.4 1493.8 679 1495.2 678.5"/>
<path d="M1472.7 681.8C1473.4 680.4 1474.8 675.7 1476.9 673.5C1479 671.2 1482.4 669.5 1485.2 668.5C1488 667.4 1492.2 667.3 1493.6 667.1"/>
</g>
<g stroke-width="1.3" fill="#fff">
<rect x="1421.7" y="669.8" width="7.7" height="7.3" rx="0.8" transform="rotate(-10 1425.5 673.5)"/>
<rect x="1470.7" y="659.6" width="7.3" height="7" rx="0.8" transform="rotate(-10 1474.4 663.1)"/>
<rect x="1485.5" y="652.1" width="7.7" height="7" rx="0.8" transform="rotate(-10 1489.4 655.6)"/>
</g>
<g stroke-width="3.0">
<path d="M1495.2 655.1C1496.2 655 1499.8 653.9 1501.1 654.3C1502.3 654.7 1502.5 657.1 1502.7 657.6"/>
<path d="M1417.6 678.5C1417.9 677.9 1418.6 675.8 1419.3 675.1C1420 674.4 1421.4 674.4 1421.8 674.3"/>
</g>
<g stroke-width="1.3" fill="#fff">
<rect x="1533.6" y="688.5" width="8.3" height="7.3" rx="0.8" transform="rotate(-15 1537.8 692.2)"/>
<ellipse cx="1516.6" cy="680.5" rx="3.3" ry="4.3" transform="rotate(-20 1516.6 680.5)"/>
</g>
<g stroke-width="3.0">
<path d="M1515.2 690.2C1516.1 689.6 1519.1 686.8 1520.3 686.8C1521.4 686.8 1522.5 688.8 1522.3 690.2C1522 691.5 1519.2 694.3 1518.6 695.2"/>
<path d="M1530.3 683.5C1529.4 684.6 1526.4 687.4 1525.3 690.2C1524.1 692.9 1523.6 697.4 1523.6 700.2C1523.6 702.9 1525 705.7 1525.3 706.8"/>
</g>
<g stroke-width="1.15">
<path d="M1095.9 740.1C1095.8 732.6 1095.9 725.1 1097.6 718.4C1099.2 711.7 1102.4 704.6 1105.9 700C1109.4 695.4 1114.1 692.6 1118.4 690.9C1122.7 689.1 1127.3 689 1131.8 689.7C1136.2 690.4 1140.9 692.2 1145.1 695C1149.3 697.9 1153.2 702 1156.8 706.7C1160.4 711.4 1164 717.5 1166.8 723.4C1169.6 729.2 1171.5 735.1 1173.5 741.7C1175.4 748.4 1177.2 755.9 1178.5 763.4C1179.7 770.9 1180.7 779.6 1181 786.8C1181.3 794 1181.1 800.7 1180.1 806.8C1179.2 812.9 1177.6 819.2 1175.1 823.5C1172.6 827.8 1168.7 830.7 1165.1 832.7C1161.5 834.7 1157.6 835.5 1153.4 835.5C1149.3 835.5 1144.5 834.7 1140.1 832.7C1135.7 830.7 1130.9 827.5 1126.8 823.5C1122.6 819.5 1118.7 814.6 1115.1 808.5C1111.5 802.4 1107.8 794.3 1105.1 786.8C1102.3 779.3 1099.9 771.2 1098.4 763.4C1096.9 755.6 1096 747.6 1095.9 740.1Z"/>
<path d="M1107.6 753.4C1107.4 747 1108.3 739.1 1110.1 733.4C1111.9 727.7 1115.1 722.3 1118.4 719.2C1121.7 716.1 1125.9 714.6 1130.1 714.7C1134.3 714.9 1139 716.4 1143.4 720.1C1147.9 723.7 1153.2 730.6 1156.8 736.7C1160.4 742.9 1163.2 750.1 1165.1 756.8C1167.1 763.4 1168.2 770.1 1168.5 776.8C1168.7 783.4 1168.5 791.5 1166.8 796.8C1165.1 802.1 1161.8 806 1158.5 808.5C1155.1 811 1150.9 812.4 1146.8 811.8C1142.6 811.3 1137.9 808.7 1133.4 805.1C1129 801.5 1123.8 795.7 1120.1 790.1C1116.3 784.6 1113 777.9 1110.9 771.8C1108.8 765.7 1107.7 759.8 1107.6 753.4Z"/>
<path d="M1115.1 808.5C1117.6 810.7 1125.4 818.3 1130.1 821.8C1134.8 825.3 1139 827.9 1143.4 829.3C1147.9 830.7 1152.1 830.9 1156.8 830.2C1161.5 829.5 1168.2 827.4 1171.8 825.2C1175.4 822.9 1177.4 818.2 1178.5 816.8"/>
<path d="M1166.8 832.7C1170.7 831.7 1184.6 828.9 1190.2 826.8C1195.7 824.7 1197.4 822.7 1200.2 820.2C1202.9 817.6 1205.7 813.2 1206.8 811.8"/>
<path d="M1090.1 696.7C1091.7 695.6 1095.9 691.7 1100.1 690C1104.2 688.4 1109.8 687.2 1115.1 686.7C1120.4 686.1 1126.5 685.8 1131.8 686.7C1137 687.5 1142.6 689.5 1146.8 691.7C1150.9 693.9 1153.4 695.9 1156.8 700C1160.1 704.2 1163.7 710 1166.8 716.7C1169.9 723.4 1172.6 732.3 1175.1 740.1C1177.6 747.9 1179.9 755.6 1181.8 763.4C1183.8 771.2 1185.4 780.7 1186.8 786.8C1188.2 792.9 1188.5 796.7 1190.2 800.1C1191.8 803.6 1194 806 1196.8 807.6C1199.6 809.3 1205.2 809.7 1206.8 810.1"/>
<path d="M1093.4 699.2C1095.1 698.2 1099.5 694.7 1103.4 693.4C1107.3 692 1112.3 691.3 1116.7 690.9C1121.2 690.4 1127.9 690.9 1130.1 690.9"/>
<path d="M1174.3 753.4C1174.9 755.6 1176.9 761.8 1177.6 766.8C1178.3 771.8 1178.3 780.7 1178.5 783.4"/>
<path d="M1206.8 810.1C1212.4 811.5 1228.5 816 1240.2 818.5C1251.9 821 1263 823.7 1276.9 825.2C1290.8 826.6 1310.1 827.3 1323.6 827.2C1337.1 827 1352.1 824.8 1357.8 824.3"/>
<path d="M1040 705.9L1090.1 735.1L1095.1 736.7"/>
<path d="M1040 711.7L1093.4 743.4"/>
<path d="M1088.4 695C1088.2 697.8 1087.3 705.3 1087.5 711.7C1087.8 718.1 1089.6 729.8 1090.1 733.4"/>
<path d="M1263.6 726.7C1264.1 725.1 1264.7 720.6 1266.9 716.7C1269.1 712.8 1273 707.5 1276.9 703.4C1280.8 699.2 1285.2 694.9 1290.3 691.7C1295.3 688.5 1301.7 685.8 1306.9 684.2C1312.2 682.5 1319.4 682.1 1321.9 681.7"/>
<path d="M1263.6 726.7C1264.1 727.8 1264.7 731.7 1266.9 733.4C1269.1 735.1 1270.2 735.6 1276.9 736.7C1283.6 737.8 1293.4 740.1 1306.9 740.1C1320.4 740.1 1349.3 737.3 1357.8 736.7"/>
<path d="M1270.2 723.4C1270.8 720.6 1274.1 715.2 1276.9 711.7C1279.7 708.2 1283.6 704.9 1286.9 702.5C1290.3 700.2 1294.4 697.9 1296.9 697.5C1299.4 697.1 1300.3 697.7 1301.9 700C1303.6 702.4 1305.3 707 1306.9 711.7C1308.6 716.4 1311.4 724.8 1311.9 728.4C1312.5 732 1312.2 732.4 1310.3 733.4C1308.3 734.4 1306.4 735.1 1300.3 734.2C1294.1 733.4 1278.6 730.2 1273.6 728.4C1268.6 726.6 1269.7 726.2 1270.2 723.4Z"/>
<path d="M1276.9 700C1279.1 698.1 1284.1 693.1 1290.3 688.4C1296.4 683.6 1309.7 674.4 1313.6 671.7"/>
<path d="M1256.9 741.7C1259.7 742.4 1265.2 745 1273.6 745.9C1281.9 746.8 1292.9 747.7 1306.9 747.1C1321 746.4 1349.3 742.9 1357.8 742.1"/>
<path d="M1255.2 745.9C1256.6 747.2 1260.5 751.2 1263.6 753.4C1266.6 755.6 1271.9 758.3 1273.6 759.3"/>
<path d="M1273.6 760.1C1279.1 761.5 1292.9 766.7 1306.9 768.4C1321 770.2 1349.3 770.1 1357.8 770.4"/>
<path d="M1290.3 772.6C1295.8 773.3 1312.4 776.3 1323.6 776.8C1334.9 777.2 1352.1 775.7 1357.8 775.4"/>
<path d="M1296.1 794.3C1300.7 794.3 1313.3 794.7 1323.6 794.3C1333.9 793.9 1352.1 792.2 1357.8 791.8"/>
</g>
<g stroke-width="3.6" stroke-dasharray="2.4 1.3" stroke-linecap="butt">
<path d="M1095.1 701.7C1097 699.5 1102.8 692.5 1106.7 688.4C1110.6 684.2 1115.1 679.7 1118.4 676.7C1121.7 673.6 1125.4 671.1 1126.8 670"/>
<path d="M1130.1 686.7C1130.9 685.3 1134.1 680.8 1135.1 678.3C1136.1 675.8 1135.8 672.8 1135.9 671.7"/>
</g>
<g stroke-width="1.3" fill="#fff">
<rect x="1091.4" y="675" width="7.3" height="8.3" rx="0.8" transform="rotate(25 1095.1 679.2)"/>
<rect x="1123.9" y="671.7" width="7.3" height="8.3" rx="0.8" transform="rotate(25 1127.6 675.8)"/>
<ellipse cx="1155.9" cy="678" rx="7.3" ry="4"/>
<ellipse cx="1155.9" cy="677" rx="3.7" ry="1.8"/>
<rect x="1152.3" y="687.2" width="7.3" height="7.3" rx="0.8" transform="rotate(-5 1155.9 690.9)"/>
</g>
<g stroke-width="3.6" stroke-dasharray="2.4 1.3" stroke-linecap="butt">
<path d="M1160.1 696.7C1161.8 696.1 1166.2 694.5 1170.1 693.4C1174 692.2 1180.7 689.7 1183.5 690C1186.3 690.3 1186.3 694.2 1186.8 695"/>
</g>
<g stroke-width="1.3" fill="#fff">
<ellipse cx="1188.5" cy="699.7" rx="7.3" ry="4"/>
<ellipse cx="1188.5" cy="698.7" rx="3.7" ry="1.8"/>
<rect x="1184.6" y="711.7" width="7.7" height="7.3" rx="0.8" transform="rotate(-5 1188.5 715.4)"/>
</g>
<g stroke-width="3.0">
<path d="M1190.2 707.5C1191.5 708.1 1194.9 710.3 1198.5 710.9C1202.1 711.4 1209.6 710.9 1211.8 710.9"/>
</g>
<g stroke-width="1.3" fill="#fff">
<rect x="1213.5" y="707.7" width="10" height="6.3" rx="0.8" transform="rotate(12 1218.5 710.9)"/>
</g>
<g stroke-width="2.0">
<path d="M1133.4 700L1141.8 703.4"/>
</g>
<g stroke-width="1.3" fill="#000">
<ellipse cx="1130.1" cy="693.7" rx="1.3" ry="1.3"/>
<ellipse cx="1147.6" cy="701.4" rx="1.5" ry="1.5"/>
</g>
<g stroke-width="1.3" fill="#fff">
<rect x="1329.8" y="723.7" width="7.7" height="7.7" rx="0.8" transform="rotate(20 1333.6 727.6)"/>
</g>
<g stroke-width="3.0">
<path d="M1338.6 728.7L1357.8 737.1"/>
<path d="M1056.7 680C1057.2 681.7 1058.4 687.2 1060 690C1061.7 692.8 1064.9 695.3 1066.7 696.7C1068.5 698.1 1070.2 698.1 1070.9 698.4"/>
<path d="M1058.4 681.7C1059.5 681.1 1063.1 679.5 1065 678.3C1067 677.2 1069.2 675.6 1070 675"/>
</g>
<g stroke-width="1.15">
<path d="M1357.6 735.9C1360.2 738 1367.4 745.2 1373.4 748.4C1379.4 751.6 1384.8 754.4 1393.4 755.1C1402 755.8 1418.5 753.4 1425.1 752.6C1431.8 751.7 1432.1 750.5 1433.5 750.1"/>
<path d="M1345 703.4C1348.9 703.4 1362 701.7 1368.4 703.4C1374.8 705 1379.5 709.8 1383.4 713.4C1387.3 717 1390.6 722.6 1391.8 725.1C1392.9 727.6 1393.1 726.9 1390.1 728.4C1387 729.9 1376.2 733.3 1373.4 734.2"/>
<path d="M1380.1 740.1L1450.2 730.1L1520.2 705"/>
<path d="M1373.4 748.4C1375.6 749.2 1381.2 752.6 1386.8 753.4C1392.3 754.3 1399.5 753.8 1406.8 753.4C1414 753 1426.2 751.3 1430.1 750.9"/>
<path d="M1483.5 736.7C1489.1 735.1 1505.8 730.3 1516.9 726.7C1528 723.1 1541.9 718.4 1550.3 715C1558.6 711.7 1564.2 708.1 1566.9 706.7"/>
<path d="M1488.5 741.7C1494.6 739.9 1514.4 734.6 1525.2 730.9C1536.1 727.1 1546.4 722.7 1553.6 719.2C1560.8 715.7 1566.1 711.6 1568.6 710"/>
<path d="M1378.4 767.6C1384.8 766.3 1407.6 761.9 1416.8 760.1C1426 758.3 1430.7 757.3 1433.5 756.8"/>
<path d="M1383.4 771.8C1391.8 770 1419.6 764 1433.5 760.9C1447.4 757.9 1461.3 754.7 1466.8 753.4"/>
<path d="M1496.9 760.9C1503 758.8 1523 753 1533.6 748.4C1544.1 743.8 1554.4 737.3 1560.3 733.4C1566.1 729.5 1567.2 726.4 1568.6 725.1"/>
<path d="M1357.6 770.1C1359.1 770 1363.3 769.7 1366.7 769.3C1370.2 768.8 1376.5 767.9 1378.4 767.6"/>
<path d="M1357.6 774.3L1375.1 771.8"/>
<path d="M1357.6 792.6C1361.9 791.9 1370.8 791.1 1383.4 788.5C1396.1 785.8 1415.9 780.9 1433.5 776.8C1451 772.6 1479.3 765.7 1488.5 763.4"/>
<path d="M1357.6 823.5C1359.1 823.2 1359.6 822.9 1366.7 821.8C1373.8 820.7 1386.2 819.9 1400.1 816.8C1414 813.8 1433.5 808.5 1450.2 803.5C1466.8 798.5 1486.3 791.8 1500.2 786.8C1514.1 781.8 1525.2 777.3 1533.6 773.4C1541.9 769.5 1545.5 767.3 1550.3 763.4C1555 759.5 1558.9 755.1 1561.9 750.1C1565 745.1 1567.2 739.8 1568.6 733.4C1570 727 1570.5 717.5 1570.3 711.7C1570 705.9 1568.6 702.5 1566.9 698.4C1565.3 694.2 1561.7 691.4 1560.3 686.7C1558.9 682 1558.9 672.8 1558.6 670"/>
<path d="M1397.6 681.7C1398 681.4 1396.9 681.1 1400.1 680C1403.3 679 1414 676.1 1416.8 675.3"/>
<path d="M1397.6 681.7L1408.4 703.4L1420.1 723.4L1423.5 725.1L1450.2 719.2L1475.2 712.5L1486.9 708.4L1493.5 695L1500.2 678.3L1501.9 670"/>
<path d="M1400.1 686.7L1416.8 718.4L1421.8 720.1L1473.5 707.5L1483.5 703.4L1490.2 688.4L1495.2 670"/>
<path d="M1506.9 670C1507.2 671.7 1507.4 676.7 1508.5 680C1509.7 683.3 1512.2 687.2 1513.5 690C1514.9 692.8 1514.9 695.6 1516.9 696.7C1518.8 697.8 1522.4 697.5 1525.2 696.7C1528 695.9 1531.3 694.5 1533.6 691.7C1535.8 688.9 1537.7 682 1538.6 680"/>
<path d="M1523.6 700C1523.8 701.7 1525.5 706.7 1525.2 710C1524.9 713.4 1524.7 717.5 1521.9 720.1C1519.1 722.6 1510.8 724.2 1508.5 725.1"/>
</g>
<g stroke-width="3.4">
<path d="M1366.7 745.9C1369.5 746.3 1375.1 748.8 1383.4 748.4C1391.8 748 1405.7 745.6 1416.8 743.4C1427.9 741.2 1439 738.1 1450.2 735.1C1461.3 732 1473.8 728.1 1483.5 725.1C1493.2 722 1502.1 719.5 1508.5 716.7C1514.9 713.9 1519.7 709.8 1521.9 708.4"/>
</g>
<g stroke-width="3.0">
<path d="M1370.1 730.1C1371.5 730.9 1375.6 734.5 1378.4 735.1C1381.2 735.6 1383.7 735.3 1386.8 733.4C1389.8 731.5 1393.4 727 1396.8 723.4C1400.1 719.8 1403.4 715 1406.8 711.7C1410.1 708.4 1413.4 705.5 1416.8 703.4C1420.1 701.3 1422.6 700.4 1426.8 699.2C1431 697.9 1435.1 697.4 1441.8 695.9C1448.5 694.3 1459.9 691.8 1466.8 690C1473.8 688.2 1478 687 1483.5 685C1489.1 683.1 1496.3 680.3 1500.2 678.3C1504.1 676.4 1505.8 674.2 1506.9 673.3"/>
<path d="M1430.1 701.7C1430.1 702.8 1429.6 706.4 1430.1 708.4C1430.7 710.3 1431.8 712.1 1433.5 713.4C1435.1 714.6 1439 715.5 1440.1 715.9"/>
</g>
<g stroke-width="1.3" fill="#fff">
<rect x="1445.5" y="711.5" width="7.7" height="7.7" rx="0.8" transform="rotate(-5 1449.3 715.4)"/>
<rect x="1371.2" y="715.4" width="7.7" height="7.7" rx="0.8" transform="rotate(20 1375.1 719.2)"/>
</g>
<g stroke-width="2.0">
<path d="M1373.4 723.4L1372.6 730.1"/>
</g>
<g stroke-width="1.3" fill="#fff">
<rect x="1330.4" y="723.7" width="7.7" height="7.7" rx="0.8" transform="rotate(20 1334.2 727.6)"/>
</g>
<g stroke-width="3.0">
<path d="M1338.4 729.2C1339.8 729.9 1344.2 732.3 1346.7 733.4C1349.2 734.5 1352.3 735.5 1353.4 735.9"/>
</g>
<g stroke-width="1.3" fill="#fff">
<rect x="1471.5" y="738.9" width="7.3" height="7.3" rx="0.8" transform="rotate(-5 1475.2 742.6)"/>
</g>
<g stroke-width="3.0">
<path d="M1458.5 743.4C1459.3 743.1 1462.1 741.5 1463.5 741.7C1464.9 742 1465.4 744.7 1466.8 745.1C1468.2 745.5 1471 744.4 1471.8 744.2"/>
<path d="M1436.8 745.9C1437.5 744.7 1439 743 1441.8 742.6C1444.6 742.2 1450.7 742.9 1453.5 743.4C1456.3 744 1458.5 744.8 1458.5 745.9C1458.5 747 1456 749.1 1453.5 750.1C1451 751.1 1446.1 752.1 1443.5 752.1C1440.8 752.1 1438.7 751.1 1437.6 750.1C1436.5 749.1 1436.1 747.2 1436.8 745.9Z"/>
</g>
<g stroke-width="2.0">
<path d="M1446.8 747.1L1456.8 745.9"/>
</g>
<g stroke-width="1.15">
<path d="M870.4 542.1C872 543.7 876.9 547.8 879.9 551.6C882.8 555.5 885.5 560.2 888 565.2C890.5 570.2 892.8 575.4 894.8 581.5C896.9 587.6 898.9 595.1 900.3 601.9C901.6 608.7 902.3 616.6 903 622.2C903.7 627.9 904.1 633.6 904.3 635.8"/>
<path d="M874.4 543.5C876 545.3 881 550.3 884 554.3C886.9 558.4 889.6 562.3 892.1 567.9C894.6 573.6 896.9 581.5 898.9 588.3C900.9 595.1 903 601.9 904.3 608.7C905.7 615.4 906.6 625.6 907 629"/>
<path d="M943.7 599.8L961.4 608.7"/>
<path d="M954.6 599.2L1000.8 625"/>
<path d="M905.7 529.2L925.4 536.7"/>
</g>
<g stroke-width="3.0">
<path d="M918.6 522.4C918.8 523.1 920.1 525.1 919.9 526.5C919.8 527.8 918.3 529.9 917.9 530.6"/>
<path d="M968.2 517.7C966.6 518.6 961.4 521.7 958.7 523.1C955.9 524.4 954.1 525.5 951.9 525.8C949.6 526.1 947.3 525.6 945.1 525.1C942.8 524.7 940.5 523.3 938.3 523.1C936 522.9 932.6 523.7 931.5 523.8"/>
<path d="M942.4 525.8C942 526.7 940.9 529.7 940.3 531.2C939.8 532.8 939.2 534.6 939 535.3"/>
</g>
<g stroke-width="1.3" fill="#fff">
<rect x="931.5" y="539.4" width="6.8" height="6" rx="0.8" transform="rotate(-15 934.9 542.4)"/>
</g>
<g stroke-width="2.0">
<path d="M935.6 546.2L937.2 550.5"/>
</g>
<g stroke-width="3.0">
<path d="M923.3 548.2C922.7 549.2 920.3 552.2 919.3 554.3C918.3 556.5 917.7 558.9 917.2 561.1C916.8 563.4 916 565.9 916.6 567.9C917.1 569.9 918.8 571.8 920.6 573.3C922.4 574.9 925.2 576.5 927.4 577.4C929.7 578.3 933.1 578.6 934.2 578.8"/>
<path d="M930.1 551.6C929.8 552.7 928.3 556.1 928.1 558.4C927.9 560.7 928 563.2 928.8 565.2C929.6 567.2 930.6 569.7 932.9 570.6C935.1 571.5 939.9 571.3 942.4 570.6C944.9 569.9 946.9 567.2 947.8 566.6"/>
<path d="M911.8 540.7C911.7 543 911.1 549.8 911.1 554.3C911.1 558.9 911.8 564.7 911.8 567.9C911.8 571.1 911.2 572.4 911.1 573.3"/>
<path d="M947.8 558.4C948 560 948.8 564.1 949.2 567.9C949.5 571.8 949.7 579.2 949.8 581.5"/>
<path d="M951.9 559.8C952.5 559.3 954.4 557.5 955.9 557C957.5 556.6 959.6 556.5 961.4 557C963.2 557.6 965.4 559.1 966.8 560.4C968.2 561.8 969.1 564.4 969.5 565.2"/>
</g>
<g stroke-width="1.3" fill="#fff">
<rect x="961.5" y="566" width="6.5" height="7.1" rx="0.8" transform="rotate(-5 964.8 569.5)"/>
</g>
<g stroke-width="3.0">
<path d="M922 586.9C922.3 588.3 923.6 591.5 924 595.1C924.5 598.7 924.5 604.1 924.7 608.7C924.9 613.2 925.2 617.7 925.4 622.2C925.6 626.8 925.9 633.6 926.1 635.8"/>
<path d="M879.2 559.8C879.3 562 879.3 569.7 879.9 573.3C880.4 577 882.1 580.1 882.6 581.5"/>
<path d="M879.2 586.9C879.4 589.2 879.8 596.4 880.6 600.5C881.4 604.6 882.5 608.7 884 611.4C885.4 614.1 888.5 615.9 889.4 616.8"/>
</g>
<g stroke-width="1.3" fill="#000">
<path d="M926.7 576.1C928.1 573.8 931.4 573.6 934.2 573.3C937 573.1 941.6 573.3 943.7 574.7C945.9 576.1 946.9 579 947.1 581.5C947.3 584 945 586.9 945.1 589.6C945.2 592.4 948.2 595.5 947.8 597.8C947.3 600.1 944.6 602.5 942.4 603.2C940.1 603.9 936.5 603.2 934.2 601.9C931.9 600.5 930.1 597.6 928.8 595.1C927.4 592.6 926.4 590.1 926.1 586.9C925.7 583.8 925.4 578.3 926.7 576.1Z"/>
</g>
<g stroke-width="0.9" fill="#fff">
<path d="M930.1 581.5L936.9 580.1L937.6 583.5L930.8 584.9Z"/>
<path d="M931.5 593.7L936.9 592.4L938.3 599.2L932.9 600.5Z"/>
<path d="M939.6 582.9L945.1 581.5L945.8 586.9L940.3 588.3Z"/>
</g>
<g stroke-width="1.3" fill="#000">
<ellipse cx="934.9" cy="603.9" rx="3.5" ry="3.5"/>
</g>
<g stroke-width="0.9" fill="#fff">
<ellipse cx="934.9" cy="603.9" rx="1.6" ry="1.6"/>
</g>
<g stroke-width="1.3" fill="#000">
<path d="M953.9 574.7C955.5 573.5 960.4 572.9 962.7 574C965.1 575.2 967.9 579.3 968.2 581.5C968.4 583.6 966.1 586 964.1 586.9C962.1 587.8 957.8 587.8 955.9 586.9C954.1 586 953.6 583.5 953.2 581.5C952.9 579.5 952.3 575.9 953.9 574.7Z"/>
</g>
<g stroke-width="1.5">
<path d="M953.2 586.9C954.1 587.8 956.6 591.9 958.7 592.4C960.7 592.8 963.9 591 965.4 589.6C967 588.3 967.7 585.1 968.2 584.2"/>
</g>
<g stroke-width="3.0">
<path d="M890.7 548.9C891.9 546.9 893.9 545.3 896.2 544.8C898.4 544.4 902.3 544.8 904.3 546.2C906.4 547.5 908 550.7 908.4 553C908.9 555.2 908.2 558 907 559.8C905.9 561.6 903.9 563.4 901.6 563.8C899.3 564.3 895.5 563.6 893.5 562.5C891.4 561.3 889.8 559.3 889.4 557C888.9 554.8 889.6 550.9 890.7 548.9Z"/>
</g>
<g stroke-width="1.3" fill="#000">
<path d="M889.4 538.7L896.9 537.4L898.2 543.5L890.7 545.5Z"/>
</g>
<g stroke-width="0.9" fill="#fff">
<path d="M890.7 539.7L895.9 538.7L896.7 542.4L891.6 543.5Z"/>
</g>
<g stroke-width="1.3" fill="#000">
<path d="M892.1 551.6C892.8 549.8 895.5 548.9 897.5 548.9C899.6 548.9 903 550.3 904.3 551.6C905.7 553 906.4 555.5 905.7 557C905 558.6 902.3 560.7 900.3 561.1C898.2 561.6 894.8 561.3 893.5 559.8C892.1 558.2 891.4 553.4 892.1 551.6Z"/>
</g>
<g stroke-width="0.9" fill="#fff">
<path d="M894.1 553L898.9 551.6L899.6 555L894.8 556.4Z"/>
<path d="M897.5 557L903.7 555.7L904.1 559.1L898.2 560.4Z"/>
</g>
<g stroke-width="2.0">
<path d="M877.2 542.8L884 546.9"/>
</g>
<g stroke-width="3.0">
<path d="M884 569.3C884.7 567.7 887.4 565.4 889.4 565.2C891.4 565 894.9 566.6 896.2 567.9C897.4 569.3 897.8 571.9 896.9 573.3C896 574.8 892.8 576.5 890.7 576.7C888.7 577 885.8 575.9 884.6 574.7C883.5 573.5 883.2 570.9 884 569.3Z"/>
</g>
<g stroke-width="1.3" fill="#000">
<path d="M898.2 578.8C899.9 577 904.9 576.5 907 577.4C909.2 578.3 910.3 581.3 911.1 584.2C911.9 587.2 912 591.5 911.8 595.1C911.6 598.7 911.5 603.9 909.8 605.9C908.1 608 903.7 608.2 901.6 607.3C899.6 606.4 898.3 603.7 897.5 600.5C896.7 597.3 896.7 591.9 896.9 588.3C897 584.7 896.5 580.6 898.2 578.8Z"/>
</g>
<g stroke-width="0.9" fill="#fff">
<path d="M900.3 581.5L907 580.1L908.1 586.9L901.3 588.3Z"/>
<path d="M900.5 591L907.7 589.6L908.7 597.8L901.6 599.2Z"/>
</g>
<g stroke-width="1.3" fill="#000">
<path d="M889.4 595.8L897.5 593.7L899.2 604.6L890.7 606.6Z"/>
<path d="M890.7 614.1L900.9 615.4L901.3 622.9L891.4 621.6Z"/>
</g>
<g stroke-width="1.3" fill="#fff">
<rect x="906.4" y="616" width="6" height="7.6" rx="0.8" transform="rotate(-5 909.4 619.8)"/>
</g>
<g stroke-width="1.5">
<path d="M903 571.3L927.4 582.9"/>
<path d="M901.6 574L926.1 585.6"/>
</g>
<g stroke-width="1.3" fill="#000">
<ellipse cx="918.6" cy="598.5" rx="2.4" ry="1.9"/>
</g>
<g stroke-width="1.3" fill="#fff">
<ellipse cx="974.3" cy="603.9" rx="4.1" ry="2.7" transform="rotate(15 974.3 603.9)"/>
<rect x="988.3" y="602.3" width="6" height="6" rx="0.8" transform="rotate(-5 991.3 605.3)"/>
<rect x="982.7" y="622.2" width="6.2" height="6.8" rx="0.8" transform="rotate(20 985.8 625.6)"/>
</g>
<g stroke-width="2.0">
<path d="M979 605.9L981.1 610.3"/>
<path d="M991.3 608.7C991 609.3 990.6 611.6 989.9 612.7C989.2 613.9 987.6 615 987.2 615.4"/>
</g>
<g stroke-width="3.0">
<path d="M976.3 635.8C976.4 633.6 976.3 625.2 977 622.2C977.7 619.3 979.1 618.6 980.4 618.2C981.6 617.7 983.8 619.3 984.5 619.5"/>
</g>
<g stroke-width="1.15">
<path d="M1073 473C1075.8 474.4 1084.6 479.3 1090 481.6C1095.4 483.9 1100.3 484 1105.5 487C1110.7 490 1116.3 494.8 1121 499.5C1125.7 504.2 1129.9 509.1 1133.5 515C1137.1 521 1140 528.2 1142.8 535.2C1145.6 542.2 1148 549.8 1150.6 557C1153.2 564.2 1155.7 571.5 1158.3 578.7C1160.9 585.9 1164.2 595.2 1166 600.4C1167.8 605.6 1168.7 608.2 1169.2 609.8"/>
<path d="M1099.3 480C1101.9 481.3 1109.9 484.4 1114.8 487.9C1119.7 491.4 1124.6 496.2 1128.8 501C1133 505.8 1136.6 510.9 1139.7 516.6C1142.8 522.3 1144.9 528.5 1147.5 535.2C1150.1 541.9 1152.6 549.8 1155.2 557C1157.8 564.2 1160.4 571.2 1163 578.7C1165.6 586.2 1168.8 596.6 1170.7 602C1172.6 607.4 1173.9 609.8 1174.6 611.3"/>
<path d="M1080 474C1082.8 475.2 1091.8 478.7 1097 481C1102.2 483.3 1106.3 484.8 1111 488C1115.7 491.2 1120.7 495.8 1125 500.5C1129.3 505.2 1133.3 510.2 1136.7 516C1140.1 521.8 1142.5 528.4 1145.2 535.2C1147.9 542 1150.4 549.8 1153 557C1155.6 564.2 1159.3 575.1 1160.6 578.7"/>
</g>
</g>
</svg>
</body>
</html>
